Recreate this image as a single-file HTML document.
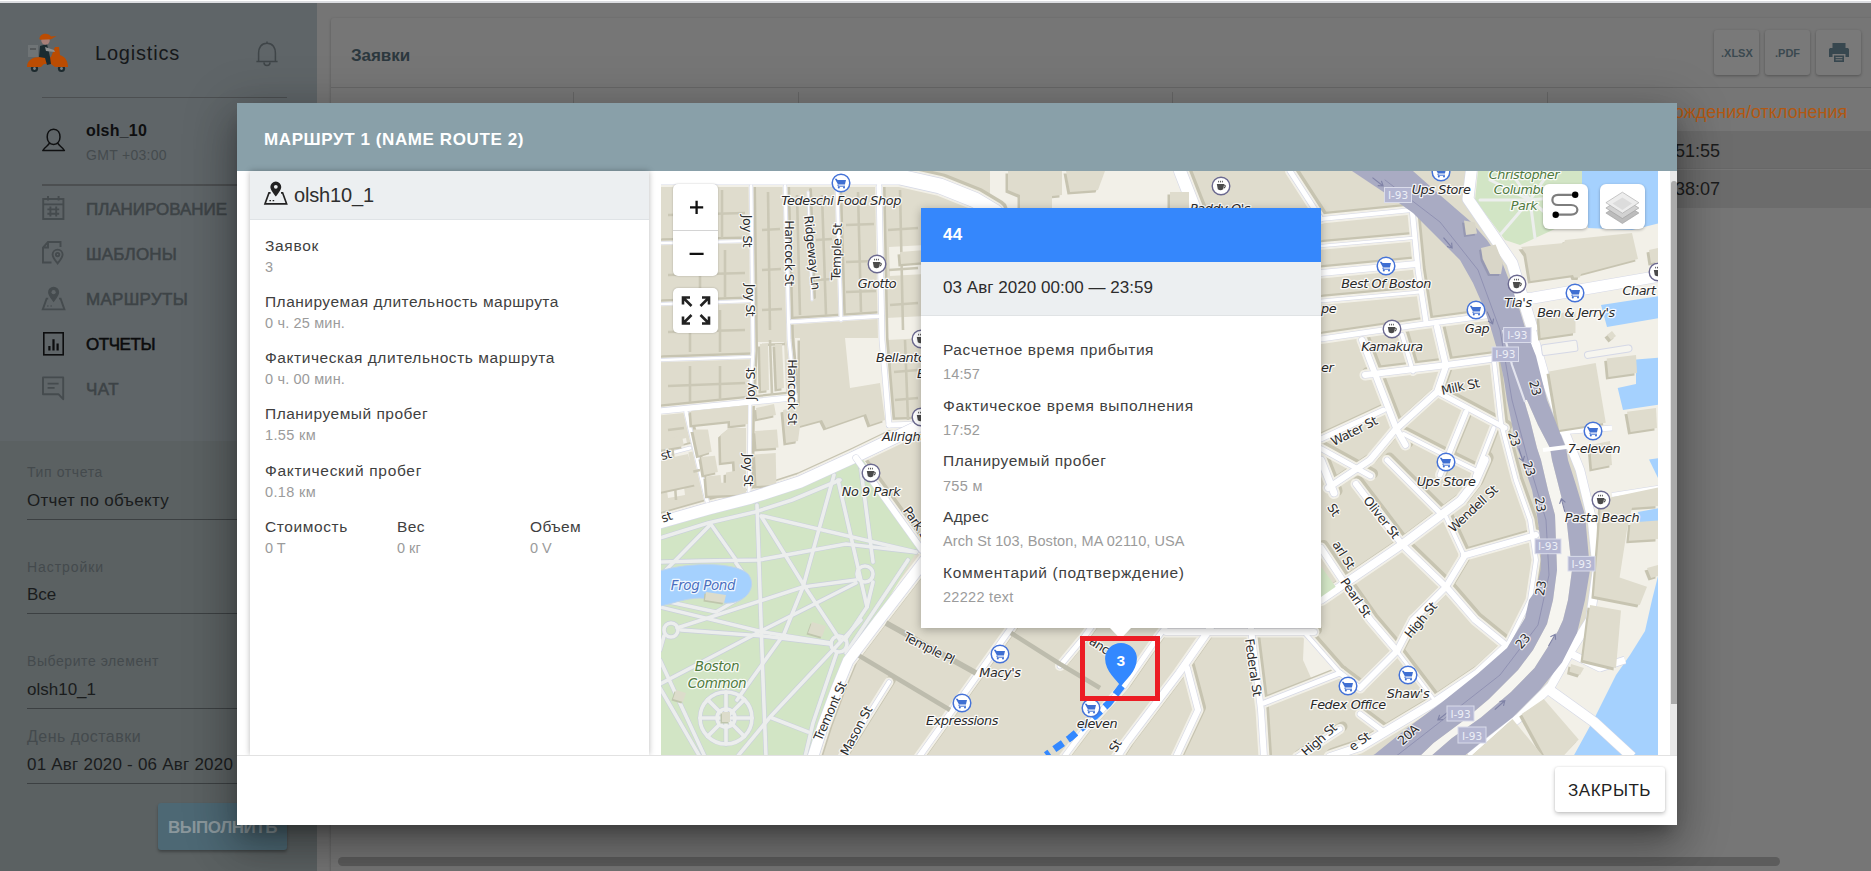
<!DOCTYPE html>
<html lang="ru">
<head>
<meta charset="utf-8">
<title>Logistics</title>
<style>
*{box-sizing:border-box;margin:0;padding:0}
html,body{width:1871px;height:871px;overflow:hidden;background:#757575;font-family:"Liberation Sans",sans-serif;}
.a{position:absolute}
.t{position:absolute;white-space:nowrap;line-height:1}
#topstrip{left:0;top:0;width:1871px;height:3px;background:linear-gradient(#fff 0,#fff 30%,#dcdde1 40%,#dcdde1 100%)}
#side{left:0;top:3px;width:317px;height:868px;background:#5f6568}
#side2{left:0;top:441px;width:317px;height:430px;background:#5b6162}
#gap{left:317px;top:3px;width:14px;height:868px;background:#757575}
#card{left:331px;top:18px;width:1545px;height:860px;background:#767676;border-radius:3px;box-shadow:0 1px 3px rgba(0,0,0,.25)}
.hl{position:absolute;height:1px;background:#4c4f51}
.mi{color:#3d4346;font-size:17px;font-weight:normal;-webkit-text-stroke:.55px currentColor;left:86px;letter-spacing:-.3px}
.lab{color:#444a4d;font-size:14px;left:27px}
.val{color:#1a1c1d;font-size:17px;left:27px}
.ul{position:absolute;left:27px;width:260px;height:1px;background:#3c4042}
#modal{left:237px;top:103px;width:1440px;height:722px;background:#fff;box-shadow:0 11px 15px -7px rgba(0,0,0,.3),0 24px 38px 3px rgba(0,0,0,.2),0 9px 46px 8px rgba(0,0,0,.18)}
#mhead{left:0;top:0;width:1440px;height:68px;background:#89a0a9}
#lpanel{left:13px;top:68px;width:399px;height:584px;background:#fff;box-shadow:0 0 6px rgba(0,0,0,.28)}
#lphead{left:0;top:0;width:399px;height:49px;background:#eceff1;border-bottom:1px solid #dfe3e6}
.fl{color:#3f3f3f;font-size:15.5px}
.fv{color:#9b9b9b;font-size:14.5px}
#map{left:661px;top:171px;width:997px;height:584px;background:#e6e2d4;overflow:hidden}
#foot{left:237px;top:755px;width:1440px;height:70px;background:#fff;border-top:1px solid #e2e2e2}
.btn{position:absolute;background:#fff;border-radius:4px;box-shadow:0 1px 5px rgba(0,0,0,.3)}
#popup{left:921px;top:208px;width:400px;height:420px;background:#fff;box-shadow:0 2px 9px rgba(0,0,0,.28)}
</style>
</head>
<body>
<div id="topstrip" class="a"></div>
<div id="side" class="a"></div>
<div id="side2" class="a"></div>
<div id="gap" class="a"></div>
<div id="card" class="a"></div>

<!-- SIDEBAR -->
<div id="sidebar">
<div class="t" style="left:95px;top:43px;font-size:20px;color:#16181a;letter-spacing:0.8px">Logistics</div>
<div class="hl" style="left:42px;top:97px;width:245px"></div>
<div class="t" style="left:86px;top:123px;font-size:16px;font-weight:bold;color:#0e0f10;letter-spacing:0.2px">olsh_10</div>
<div class="t" style="left:86px;top:148px;font-size:14px;color:#454b4e;letter-spacing:0.3px">GMT +03:00</div>
<div class="hl" style="left:42px;top:184px;width:245px;height:1.5px"></div>
<div class="t mi" style="top:201px;letter-spacing:-0.03px">ПЛАНИРОВАНИЕ</div>
<div class="t mi" style="top:246px;letter-spacing:0.17px">ШАБЛОНЫ</div>
<div class="t mi" style="top:291px;letter-spacing:0.3px">МАРШРУТЫ</div>
<div class="t mi" style="top:336px;color:#0b0c0d;letter-spacing:-0.45px">ОТЧЕТЫ</div>
<div class="t mi" style="top:381px;letter-spacing:0.42px">ЧАТ</div>

<div class="t lab" style="top:465px;letter-spacing:0.62px">Тип отчета</div>
<div class="t val" style="top:492px;letter-spacing:0.28px">Отчет по объекту</div>
<div class="ul" style="top:519px"></div>
<div class="t lab" style="top:560px;letter-spacing:0.93px">Настройки</div>
<div class="t val" style="top:586px;letter-spacing:-0.1px">Все</div>
<div class="ul" style="top:613px"></div>
<div class="t lab" style="top:654px;letter-spacing:0.57px">Выберите элемент</div>
<div class="t val" style="top:681px;letter-spacing:-0px">olsh10_1</div>
<div class="ul" style="top:708px"></div>
<div class="t lab" style="top:729px;font-size:16px;letter-spacing:0.46px">День доставки</div>
<div class="t val" style="top:756px;letter-spacing:0.22px">01 Авг 2020 - 06 Авг 2020</div>
<div class="ul" style="top:783px"></div>
<div class="a" style="left:158px;top:803px;width:129px;height:47px;background:#4d6874;border-radius:3px;box-shadow:0 2px 3px rgba(0,0,0,.3)"></div>
<div class="t" style="left:168px;top:819px;font-size:17px;font-weight:bold;color:#8a979c;letter-spacing:-0.44px">ВЫПОЛНИТЬ</div>
</div>


<!-- SIDEBAR ICONS -->
<svg class="a" style="left:24px;top:30px" width="48" height="46" viewBox="0 0 48 46">
 <circle cx="10.5" cy="38.5" r="3.6" fill="#1d2a2e"/><circle cx="37.5" cy="38.5" r="3.6" fill="#1d2a2e"/>
 <circle cx="10.5" cy="38.5" r="1.4" fill="#7a7f82"/><circle cx="37.5" cy="38.5" r="1.4" fill="#7a7f82"/>
 <path d="M3 37 C3 30 9 27 16 27 L27 27 L31 17 L35 17 L36 25 C42 27 44 32 44 37 L31 37 L27 34 L20 34 L17 37 Z" fill="#bb4c02"/>
 <rect x="4" y="15" width="10" height="12" fill="#6f7476"/><rect x="6" y="18" width="6" height="2" fill="#55595b"/>
 <path d="M16 16 L23 14 L26 27 L27 34 L23 35 L21 28 L15 27 Z" fill="#1b2b30"/>
 <path d="M21 17 L30 20 L31 22 L22 21 Z" fill="#8d8f90"/>
 <circle cx="21.5" cy="10.5" r="4.2" fill="#a77f78"/>
 <path d="M15.5 9 C15.5 3.5 24 2 27 6.5 L32.5 6 L27 9.2 L16 9.8 Z" fill="#bb4c02"/>
</svg>
<svg class="a" style="left:254px;top:39.5px" width="26" height="30" viewBox="0 0 26 30"><path d="M13 3.2 C7 3.2 4.6 8 4.6 13 L4.6 21.5 L21.4 21.5 L21.4 13 C21.4 8 19 3.2 13 3.2 Z M2.4 21.5 H23.6 M10 22.5 A3 3 0 0 0 16 22.5 M13 1.6V3.2" fill="none" stroke="#3f4548" stroke-width="1.5"/></svg>
<svg class="a" style="left:40px;top:126px" width="28" height="28" viewBox="0 0 28 28"><path d="M13.6 3.2 C9 3.2 7.2 7.2 7.2 11 C7.2 14.8 9.4 18.4 13.6 18.4 C17.8 18.4 20 14.8 20 11 C20 7.2 18.2 3.2 13.6 3.2 Z M9.6 16.8 C8.8 19.6 5 20.6 2.8 24.6 L24.4 24.6 C22.2 20.6 18.4 19.6 17.6 16.8" fill="none" stroke="#0f1011" stroke-width="1.5" stroke-linejoin="round"/></svg>
<svg class="a" style="left:40px;top:194px" width="28" height="28" viewBox="0 0 28 28"><g fill="none" stroke="#454b4e" stroke-width="1.9"><rect x="3.2" y="5" width="20.2" height="20"/><path d="M3.2 10.4H23.4M8 2V6.6M18.6 2V6.6M10.4 12.6V22.4M16.2 12.6V22.4M7.4 15.4H19.2M7.4 19.8H19.2"/></g></svg>
<svg class="a" style="left:40px;top:239px" width="28" height="28" viewBox="0 0 28 28"><g fill="none" stroke="#454b4e" stroke-width="1.9"><path d="M20.5 8V3H8L3 8.5V23.5H11.5M3 8.5H8V3"/><path d="M17.6 24.4 C14.6 20.6 12.6 18.6 12.6 15.6 A5 5 0 0 1 22.6 15.6 C22.6 18.6 20.6 20.6 17.6 24.4Z"/><circle cx="17.6" cy="15.6" r="1.7"/></g></svg>
<svg class="a" style="left:40px;top:284px" width="28" height="28" viewBox="0 0 28 28"><g fill="none" stroke="#454b4e" stroke-width="1.9"><path d="M13.6 16.6 C10.6 12.6 9 10.8 9 8.2 A4.6 4.6 0 0 1 18.2 8.2 C18.2 10.8 16.6 12.6 13.6 16.6Z" fill="#454b4e"/><circle cx="13.6" cy="8.2" r="2.1" fill="#5f6568" stroke="none"/><path d="M8.2 14.6H6.6L2.8 25.4H24.4L20.6 14.6H19"/><path d="M7 22h1.6M10.4 22h1.6" stroke-width="1.2"/></g></svg>
<svg class="a" style="left:40px;top:330px" width="28" height="28" viewBox="0 0 28 28"><rect x="3.8" y="2.8" width="19.4" height="22" fill="none" stroke="#0c0d0e" stroke-width="1.6"/><path d="M9.4 20.6V16M13.5 20.6V9.2M17.6 20.6V13.4" stroke="#0c0d0e" stroke-width="2.2" fill="none"/></svg>
<svg class="a" style="left:40px;top:374px" width="28" height="28" viewBox="0 0 28 28"><g fill="none" stroke="#454b4e" stroke-width="1.9"><path d="M3 3.4H23.2V25.2L18.4 20.2H3Z" stroke-linejoin="round"/><path d="M7.6 9.6H18.6M7.6 13.8H14.6" stroke-width="1.8"/></g></svg>

<!-- MAIN -->
<div id="main">
<div class="t" style="left:351px;top:47px;font-size:17px;font-weight:bold;color:#2c383e;letter-spacing:-0.07px">Заявки</div>
<div class="hl" style="left:331px;top:87px;width:1540px;background:#676767"></div>
<div class="a" style="left:1714px;top:30px;width:45px;height:45px;background:#797979;border-radius:3px;box-shadow:0 1px 3px rgba(0,0,0,.3)"></div>
<div class="a" style="left:1765px;top:30px;width:45px;height:45px;background:#797979;border-radius:3px;box-shadow:0 1px 3px rgba(0,0,0,.3)"></div>
<div class="a" style="left:1816px;top:30px;width:45px;height:45px;background:#797979;border-radius:3px;box-shadow:0 1px 3px rgba(0,0,0,.3)"></div>
<div class="t" style="left:1721px;top:48px;font-size:11px;font-weight:bold;color:#3b4950">.XLSX</div>
<div class="t" style="left:1775px;top:48px;font-size:11px;font-weight:bold;color:#3b4950">.PDF</div>
<svg class="a" style="left:1826px;top:40px" width="26" height="26" viewBox="0 0 26 26"><path d="M6.5 3h13v5h-13z M3 9.5 C3 8.5 4 8 5 8H21C22 8 23 8.5 23 9.5V17H19.5V14H6.5V17H3Z M8 15.5h10v6.5H8z" fill="#37474f"/><path d="M9.6 17.6h6.8M9.6 19.8h6.8" stroke="#7c7c7c" stroke-width="1"/></svg>
<div class="a" style="left:573px;top:92px;width:1px;height:12px;background:#666"></div>
<div class="a" style="left:798px;top:92px;width:1px;height:12px;background:#666"></div>
<div class="a" style="left:1172px;top:92px;width:1px;height:12px;background:#666"></div>
<div class="a" style="left:1547px;top:92px;width:1px;height:12px;background:#666"></div>
<div class="a" style="left:1547px;top:131px;width:330px;height:38px;background:#6c6c6c;border-bottom:1px solid #676767"></div>
<div class="a" style="left:1547px;top:170px;width:330px;height:38px;background:#6c6c6c"></div>
<div class="t" style="left:1586px;top:103px;font-size:18px;color:#b25812">Время нахождения/отклонения</div>
<div class="t" style="left:1650px;top:142px;font-size:18px;color:#1c1c1c">00:51:55</div>
<div class="t" style="left:1650px;top:180px;font-size:18px;color:#1c1c1c">00:38:07</div>
<div class="a" style="left:338px;top:857px;width:1442px;height:9px;border-radius:5px;background:#5c5c5c"></div>
</div>

<!-- MODAL -->
<div id="modal" class="a">
 <div id="mhead" class="a"></div>
 <div class="t" style="left:27px;top:28px;font-size:17px;font-weight:bold;color:#fff;letter-spacing:0.6px">МАРШРУТ 1 (NAME ROUTE 2)</div>
 <div id="lpanel" class="a">
  <div id="lphead" class="a"></div>
  <div class="t" style="left:44px;top:14px;font-size:20px;color:#2e2e2e;letter-spacing:-0.15px">olsh10_1</div>
  <div class="t fl" style="left:15px;top:67px;letter-spacing:0.69px">Заявок</div>
  <div class="t fv" style="left:15px;top:89px">3</div>
  <div class="t fl" style="left:15px;top:123px;letter-spacing:0.48px">Планируемая длительность маршрута</div>
  <div class="t fv" style="left:15px;top:145px;letter-spacing:0.17px">0 ч. 25 мин.</div>
  <div class="t fl" style="left:15px;top:179px;letter-spacing:0.56px">Фактическая длительность маршрута</div>
  <div class="t fv" style="left:15px;top:201px;letter-spacing:0.17px">0 ч. 00 мин.</div>
  <div class="t fl" style="left:15px;top:235px;letter-spacing:0.5px">Планируемый пробег</div>
  <div class="t fv" style="left:15px;top:257px;letter-spacing:0.35px">1.55 км</div>
  <div class="t fl" style="left:15px;top:292px;letter-spacing:0.69px">Фактический пробег</div>
  <div class="t fv" style="left:15px;top:314px;letter-spacing:0.35px">0.18 км</div>
  <div class="t fl" style="left:15px;top:348px;letter-spacing:0.6px">Стоимость</div>
  <div class="t fv" style="left:15px;top:370px">0 T</div>
  <div class="t fl" style="left:147px;top:348px;letter-spacing:0.43px">Вес</div>
  <div class="t fv" style="left:147px;top:370px">0 кг</div>
  <div class="t fl" style="left:280px;top:348px;letter-spacing:0.32px">Объем</div>
  <div class="t fv" style="left:280px;top:370px">0 V</div>
 </div>
 <svg class="a" style="left:25px;top:76px" width="28" height="28" viewBox="0 0 28 28"><g fill="none" stroke="#222" stroke-width="1.7"><path d="M13.8 16.2 C10.8 12.2 9.2 10.6 9.2 8 A4.6 4.6 0 0 1 18.4 8 C18.4 10.6 16.8 12.2 13.8 16.2Z" fill="#222"/><path d="M8.6 13.8H7L3 24.8H24.6L20.6 13.8H19"/><path d="M7.4 21.6h1.6M10.6 21.6h1.6" stroke-width="1.2"/></g><circle cx="13.8" cy="7.8" r="1.9" fill="#eceff1"/></svg>
 <div class="a" style="left:1433px;top:68px;width:7px;height:584px;background:#e9e9e9"></div>
 <div class="a" style="left:1433.5px;top:78px;width:6.5px;height:523px;background:#ababab;border-radius:3px 3px 0 0"></div>
</div>
<div id="foot" class="a">
 <div class="btn" style="left:1318px;top:11px;width:110px;height:45px;border-radius:3px;box-shadow:0 2px 4px rgba(0,0,0,.22),0 0 2px rgba(0,0,0,.12)"></div>
 <div class="t" style="left:1331px;top:26px;font-size:17px;color:#222;letter-spacing:0.51px">ЗАКРЫТЬ</div>
</div>

<!-- MAP -->
<div id="map" class="a">
<svg id="mapsvg" width="1000" height="584" viewBox="660 171 1000 584" style="position:absolute;left:-1px;top:0">
<!--MAPSTART-->
<rect x="660" y="171" width="1000" height="584" fill="#dfdccd"/>
<polygon points="795,338 881,338 889,444 760,494 756,420 797,408" fill="#f2f0e8" />
<polygon points="690,424 747,419 747,497 709,508" fill="#f2f0e8" />
<polygon points="664,468 681,464 685,495 668,498" fill="#f2f0e8" />
<polygon points="753,405 797,398 800,478 753,494" fill="#f2f0e8" />
<polygon points="889,247 925,245 925,274 890,276" fill="#f2f0e8" />
<polygon points="886,318 925,316 925,338 887,340" fill="#f2f0e8" />
<polygon points="757,342 784,342 786,392 757,396" fill="#f2f0e8" />
<polygon points="660,444 686,438 690,462 660,468" fill="#f2f0e8" />
<polygon points="846,338 881,338 884,384 850,388" fill="#f2f0e8" />
<polygon points="1304,637 1337,668 1312,680 1303,660" fill="#f2f0e8" />
<polygon points="990,171 1180,171 1180,212 990,212" fill="#f2f0e8" />
<polyline points="662.5,174.5 902.5,174.5 942.5,183.5 977.5,197.5 997.5,209.5" fill="none" stroke="#c7c4b1" stroke-width="20" stroke-linecap="round" stroke-linejoin="round" />
<polyline points="753.5,183.5 755.5,348.5 752.5,397.5 751.5,497.5" fill="none" stroke="#c7c4b1" stroke-width="5" stroke-linecap="round" stroke-linejoin="round" />
<polyline points="787.5,183.5 791.5,337.5 797.5,395.5" fill="none" stroke="#c7c4b1" stroke-width="5" stroke-linecap="round" stroke-linejoin="round" />
<polyline points="810.5,189.5 814.5,297.5" fill="none" stroke="#c7c4b1" stroke-width="3" stroke-linecap="round" stroke-linejoin="round" />
<polyline points="839.5,183.5 843.5,317.5" fill="none" stroke="#c7c4b1" stroke-width="5" stroke-linecap="round" stroke-linejoin="round" />
<polyline points="881.5,183.5 884.5,337.5 891.5,422.5" fill="none" stroke="#c7c4b1" stroke-width="8" stroke-linecap="round" stroke-linejoin="round" />
<polyline points="791.5,319.5 884.5,313.5" fill="none" stroke="#c7c4b1" stroke-width="5.5" stroke-linecap="round" stroke-linejoin="round" />
<polyline points="662.5,240.5 753.5,238.5" fill="none" stroke="#c7c4b1" stroke-width="4.5" stroke-linecap="round" stroke-linejoin="round" />
<polyline points="662.5,301.5 753.5,298.5" fill="none" stroke="#c7c4b1" stroke-width="4.5" stroke-linecap="round" stroke-linejoin="round" />
<polyline points="662.5,357.5 753.5,354.5" fill="none" stroke="#c7c4b1" stroke-width="4.5" stroke-linecap="round" stroke-linejoin="round" />
<polyline points="662.5,408.5 753.5,399.5 811.5,393.5" fill="none" stroke="#c7c4b1" stroke-width="8.5" stroke-linecap="round" stroke-linejoin="round" />
<polyline points="688.5,409.5 710.5,502.5" fill="none" stroke="#c7c4b1" stroke-width="5.5" stroke-linecap="round" stroke-linejoin="round" />
<polyline points="662.5,453.5 692.5,445.5" fill="none" stroke="#c7c4b1" stroke-width="8" stroke-linecap="round" stroke-linejoin="round" />
<polyline points="657.5,521.5 710.5,506.4 753.5,495.4 802.5,479.5 855.5,455.3 922,423.2 932.5,418.5" fill="none" stroke="#c7c4b1" stroke-width="16.5" stroke-linecap="round" stroke-linejoin="round" />
<polyline points="858.5,455.5 924.5,547.5" fill="none" stroke="#c7c4b1" stroke-width="11" stroke-linecap="round" stroke-linejoin="round" />
<polyline points="942.5,537.5 921.5,565.5 881.5,617.5 850.5,658.5 838.5,687.5 825.5,722.5 815.1,755.5" fill="none" stroke="#c7c4b1" stroke-width="15.5" stroke-linecap="round" stroke-linejoin="round" />
<polyline points="1323.5,216.5 1414.5,207.5" fill="none" stroke="#c7c4b1" stroke-width="9" stroke-linecap="round" stroke-linejoin="round" />
<polyline points="1323.5,270.5 1418.5,261.5" fill="none" stroke="#c7c4b1" stroke-width="11" stroke-linecap="round" stroke-linejoin="round" />
<polyline points="1323.5,243.5 1414.5,235.5" fill="none" stroke="#c7c4b1" stroke-width="7.5" stroke-linecap="round" stroke-linejoin="round" />
<polyline points="1323.5,298.5 1422.5,289.5" fill="none" stroke="#c7c4b1" stroke-width="8" stroke-linecap="round" stroke-linejoin="round" />
<polyline points="1414.5,205.5 1420.5,267.5 1428.5,319.5" fill="none" stroke="#c7c4b1" stroke-width="10" stroke-linecap="round" stroke-linejoin="round" />
<polyline points="1323.5,336.5 1419.5,322.5 1495.5,312.5" fill="none" stroke="#c7c4b1" stroke-width="10" stroke-linecap="round" stroke-linejoin="round" />
<polyline points="1367.5,372.5 1441.5,363.5 1496.5,356.1" fill="none" stroke="#c7c4b1" stroke-width="11" stroke-linecap="round" stroke-linejoin="round" />
<polyline points="1364.5,337.5 1398.5,425.5 1408,442.5" fill="none" stroke="#c7c4b1" stroke-width="11" stroke-linecap="round" stroke-linejoin="round" />
<polyline points="1404.5,332.2 1415.5,369" fill="none" stroke="#c7c4b1" stroke-width="9" stroke-linecap="round" stroke-linejoin="round" />
<polyline points="1439.5,324.5 1448.5,363.5" fill="none" stroke="#c7c4b1" stroke-width="11" stroke-linecap="round" stroke-linejoin="round" />
<polyline points="1439.5,389.2 1507.5,425.5" fill="none" stroke="#c7c4b1" stroke-width="10" stroke-linecap="round" stroke-linejoin="round" />
<polyline points="1448.5,363.5 1439.5,389.5 1397.5,427.5 1372.5,457.5 1330.5,485.5" fill="none" stroke="#c7c4b1" stroke-width="11" stroke-linecap="round" stroke-linejoin="round" />
<polyline points="1323.5,436.5 1386,407.5" fill="none" stroke="#c7c4b1" stroke-width="10" stroke-linecap="round" stroke-linejoin="round" />
<polyline points="1406.2,431.5 1441.1,449.5 1477.5,467.5" fill="none" stroke="#c7c4b1" stroke-width="9" stroke-linecap="round" stroke-linejoin="round" />
<polyline points="1468.5,409.5 1452.1,449.5 1442.5,472.5" fill="none" stroke="#c7c4b1" stroke-width="10" stroke-linecap="round" stroke-linejoin="round" />
<polyline points="1496.2,425.5 1477.5,473.5" fill="none" stroke="#c7c4b1" stroke-width="9" stroke-linecap="round" stroke-linejoin="round" />
<polyline points="1323.5,446.1 1373.1,473.5" fill="none" stroke="#c7c4b1" stroke-width="10" stroke-linecap="round" stroke-linejoin="round" />
<polyline points="1389.5,457.5 1441.1,509" fill="none" stroke="#c7c4b1" stroke-width="10" stroke-linecap="round" stroke-linejoin="round" />
<polyline points="1496.2,356.1 1503.5,420.5 1518.3,477.5 1532.5,517.5 1538.5,557.5 1532.5,597.5 1509.5,643.5" fill="none" stroke="#c7c4b1" stroke-width="9" stroke-linecap="round" stroke-linejoin="round" />
<polyline points="1323.5,597.2 1404.5,542 1463.2,497.9 1477.5,479.5 1487.1,457.5" fill="none" stroke="#c7c4b1" stroke-width="13" stroke-linecap="round" stroke-linejoin="round" />
<polyline points="1358.5,481.5 1404.5,542 1450.3,586.1 1477.5,617.5 1509.5,643.5" fill="none" stroke="#c7c4b1" stroke-width="11" stroke-linecap="round" stroke-linejoin="round" />
<polyline points="1323.5,545.5 1345.5,578.5 1373.1,617.5 1399.5,648.5" fill="none" stroke="#c7c4b1" stroke-width="11" stroke-linecap="round" stroke-linejoin="round" />
<polyline points="1399.5,648.5 1436,696.5" fill="none" stroke="#c7c4b1" stroke-width="8" stroke-linecap="round" stroke-linejoin="round" />
<polyline points="1362.5,685.5 1399.5,648.5 1415.5,617.5 1448.5,584.3 1466.5,554.5" fill="none" stroke="#c7c4b1" stroke-width="11" stroke-linecap="round" stroke-linejoin="round" />
<polyline points="1466.5,553 1538.5,532.5" fill="none" stroke="#c7c4b1" stroke-width="11" stroke-linecap="round" stroke-linejoin="round" />
<polyline points="1448.5,514.5 1466.5,553" fill="none" stroke="#c7c4b1" stroke-width="9" stroke-linecap="round" stroke-linejoin="round" />
<polyline points="1323.5,457.5 1336.5,490.5" fill="none" stroke="#c7c4b1" stroke-width="12" stroke-linecap="round" stroke-linejoin="round" />
<polyline points="1332.5,754.5 1362.5,744.5 1436,700.5 1480.5,670.5 1509.5,643.5" fill="none" stroke="#c7c4b1" stroke-width="13" stroke-linecap="round" stroke-linejoin="round" />
<polyline points="1362.5,711.5 1386.5,729.5" fill="none" stroke="#c7c4b1" stroke-width="10" stroke-linecap="round" stroke-linejoin="round" />
<polyline points="1342.5,670.5 1266.5,700.5" fill="none" stroke="#c7c4b1" stroke-width="10" stroke-linecap="round" stroke-linejoin="round" />
<polyline points="1342.5,726.5 1299.5,754.5" fill="none" stroke="#c7c4b1" stroke-width="10" stroke-linecap="round" stroke-linejoin="round" />
<polyline points="1342.5,670.5 1362.5,685.5" fill="none" stroke="#c7c4b1" stroke-width="10" stroke-linecap="round" stroke-linejoin="round" />
<polyline points="1032.5,597.5 1013.5,625.5 921.5,754.5" fill="none" stroke="#c7c4b1" stroke-width="10.5" stroke-linecap="round" stroke-linejoin="round" />
<polyline points="891.5,679.5 844.5,754.5" fill="none" stroke="#c7c4b1" stroke-width="9" stroke-linecap="round" stroke-linejoin="round" />
<polyline points="1062.5,663.5 1086.5,634.5 1102.5,612.5" fill="none" stroke="#c7c4b1" stroke-width="10" stroke-linecap="round" stroke-linejoin="round" />
<polyline points="1217.5,617.5 1209.5,630.5 1181.5,670.5 1128.5,740.5 1119.5,754.5" fill="none" stroke="#c7c4b1" stroke-width="12" stroke-linecap="round" stroke-linejoin="round" />
<polyline points="1167.5,625.5 1160.5,634.5 1126.5,683.5 1087.5,726.5 1066.5,754.5" fill="none" stroke="#c7c4b1" stroke-width="10" stroke-linecap="round" stroke-linejoin="round" />
<polyline points="1189.5,665.5 1200.5,707.5 1178.5,754.5" fill="none" stroke="#c7c4b1" stroke-width="11" stroke-linecap="round" stroke-linejoin="round" />
<polyline points="1252.5,617.5 1253.5,626.5 1263.5,707.5 1266.5,754.5" fill="none" stroke="#c7c4b1" stroke-width="11" stroke-linecap="round" stroke-linejoin="round" />
<polyline points="1168.5,629.5 1316.5,629.5" fill="none" stroke="#c7c4b1" stroke-width="11" stroke-linecap="round" stroke-linejoin="round" />
<polyline points="1306.5,629.5 1342.5,670.5" fill="none" stroke="#c7c4b1" stroke-width="9" stroke-linecap="round" stroke-linejoin="round" />
<polyline points="923.5,421.5 962.5,407.5" fill="none" stroke="#c7c4b1" stroke-width="13" stroke-linecap="round" stroke-linejoin="round" />
<polyline points="891.5,422.5 923.5,421.5" fill="none" stroke="#c7c4b1" stroke-width="10" stroke-linecap="round" stroke-linejoin="round" />
<polyline points="1182.5,168.5 1198.5,209.5" fill="none" stroke="#c7c4b1" stroke-width="17" stroke-linecap="round" stroke-linejoin="round" />
<polyline points="1292.5,168.5 1323.5,216.5" fill="none" stroke="#c7c4b1" stroke-width="10" stroke-linecap="round" stroke-linejoin="round" />
<polyline points="660,177 900,177 940,186 975,200 995,212" fill="none" stroke="#f2f0e8" stroke-width="20" stroke-linecap="round" stroke-linejoin="round" />
<polyline points="751,186 753,351 750,400 749,500" fill="none" stroke="#f2f0e8" stroke-width="5" stroke-linecap="round" stroke-linejoin="round" />
<polyline points="785,186 789,340 795,398" fill="none" stroke="#f2f0e8" stroke-width="5" stroke-linecap="round" stroke-linejoin="round" />
<polyline points="808,192 812,300" fill="none" stroke="#f2f0e8" stroke-width="3" stroke-linecap="round" stroke-linejoin="round" />
<polyline points="837,186 841,320" fill="none" stroke="#f2f0e8" stroke-width="5" stroke-linecap="round" stroke-linejoin="round" />
<polyline points="879,186 882,340 889,425" fill="none" stroke="#f2f0e8" stroke-width="8" stroke-linecap="round" stroke-linejoin="round" />
<polyline points="789,322 882,316" fill="none" stroke="#f2f0e8" stroke-width="5.5" stroke-linecap="round" stroke-linejoin="round" />
<polyline points="660,243 751,241" fill="none" stroke="#f2f0e8" stroke-width="4.5" stroke-linecap="round" stroke-linejoin="round" />
<polyline points="660,304 751,301" fill="none" stroke="#f2f0e8" stroke-width="4.5" stroke-linecap="round" stroke-linejoin="round" />
<polyline points="660,360 751,357" fill="none" stroke="#f2f0e8" stroke-width="4.5" stroke-linecap="round" stroke-linejoin="round" />
<polyline points="660,411 751,402 809,396" fill="none" stroke="#f2f0e8" stroke-width="8.5" stroke-linecap="round" stroke-linejoin="round" />
<polyline points="686,412 708,505" fill="none" stroke="#f2f0e8" stroke-width="5.5" stroke-linecap="round" stroke-linejoin="round" />
<polyline points="660,456 690,448" fill="none" stroke="#f2f0e8" stroke-width="8" stroke-linecap="round" stroke-linejoin="round" />
<polyline points="655,524 708,508.9 751,497.9 800,482 853,457.8 919.5,425.7 930,421" fill="none" stroke="#f2f0e8" stroke-width="16.5" stroke-linecap="round" stroke-linejoin="round" />
<polyline points="856,458 922,550" fill="none" stroke="#f2f0e8" stroke-width="11" stroke-linecap="round" stroke-linejoin="round" />
<polyline points="940,540 919,568 879,620 848,661 836,690 823,725 812.6,758" fill="none" stroke="#f2f0e8" stroke-width="15.5" stroke-linecap="round" stroke-linejoin="round" />
<polyline points="1321,219 1412,210" fill="none" stroke="#f2f0e8" stroke-width="9" stroke-linecap="round" stroke-linejoin="round" />
<polyline points="1321,273 1416,264" fill="none" stroke="#f2f0e8" stroke-width="11" stroke-linecap="round" stroke-linejoin="round" />
<polyline points="1321,246 1412,238" fill="none" stroke="#f2f0e8" stroke-width="7.5" stroke-linecap="round" stroke-linejoin="round" />
<polyline points="1321,301 1420,292" fill="none" stroke="#f2f0e8" stroke-width="8" stroke-linecap="round" stroke-linejoin="round" />
<polyline points="1412,208 1418,270 1426,322" fill="none" stroke="#f2f0e8" stroke-width="10" stroke-linecap="round" stroke-linejoin="round" />
<polyline points="1321,339 1417,325 1493,315" fill="none" stroke="#f2f0e8" stroke-width="10" stroke-linecap="round" stroke-linejoin="round" />
<polyline points="1365,375 1439,366 1494,358.6" fill="none" stroke="#f2f0e8" stroke-width="11" stroke-linecap="round" stroke-linejoin="round" />
<polyline points="1362,340 1396,428 1405.5,445" fill="none" stroke="#f2f0e8" stroke-width="11" stroke-linecap="round" stroke-linejoin="round" />
<polyline points="1402,334.7 1413,371.5" fill="none" stroke="#f2f0e8" stroke-width="9" stroke-linecap="round" stroke-linejoin="round" />
<polyline points="1437,327 1446,366" fill="none" stroke="#f2f0e8" stroke-width="11" stroke-linecap="round" stroke-linejoin="round" />
<polyline points="1437,391.7 1505,428" fill="none" stroke="#f2f0e8" stroke-width="10" stroke-linecap="round" stroke-linejoin="round" />
<polyline points="1446,366 1437,392 1395,430 1370,460 1328,488" fill="none" stroke="#f2f0e8" stroke-width="11" stroke-linecap="round" stroke-linejoin="round" />
<polyline points="1321,439 1383.5,410" fill="none" stroke="#f2f0e8" stroke-width="10" stroke-linecap="round" stroke-linejoin="round" />
<polyline points="1403.7,434 1438.6,452 1475,470" fill="none" stroke="#f2f0e8" stroke-width="9" stroke-linecap="round" stroke-linejoin="round" />
<polyline points="1466,412 1449.6,452 1440,475" fill="none" stroke="#f2f0e8" stroke-width="10" stroke-linecap="round" stroke-linejoin="round" />
<polyline points="1493.7,428 1475,476" fill="none" stroke="#f2f0e8" stroke-width="9" stroke-linecap="round" stroke-linejoin="round" />
<polyline points="1321,448.6 1370.6,476" fill="none" stroke="#f2f0e8" stroke-width="10" stroke-linecap="round" stroke-linejoin="round" />
<polyline points="1387,460 1438.6,511.5" fill="none" stroke="#f2f0e8" stroke-width="10" stroke-linecap="round" stroke-linejoin="round" />
<polyline points="1493.7,358.6 1501,423 1515.8,480 1530,520 1536,560 1530,600 1507,646" fill="none" stroke="#f2f0e8" stroke-width="9" stroke-linecap="round" stroke-linejoin="round" />
<polyline points="1321,599.7 1402,544.5 1460.7,500.4 1475,482 1484.6,460" fill="none" stroke="#f2f0e8" stroke-width="13" stroke-linecap="round" stroke-linejoin="round" />
<polyline points="1356,484 1402,544.5 1447.8,588.6 1475,620 1507,646" fill="none" stroke="#f2f0e8" stroke-width="11" stroke-linecap="round" stroke-linejoin="round" />
<polyline points="1321,548 1343,581 1370.6,620 1397,651" fill="none" stroke="#f2f0e8" stroke-width="11" stroke-linecap="round" stroke-linejoin="round" />
<polyline points="1397,651 1433.5,699" fill="none" stroke="#f2f0e8" stroke-width="8" stroke-linecap="round" stroke-linejoin="round" />
<polyline points="1360,688 1397,651 1413,620 1446,586.8 1464,557" fill="none" stroke="#f2f0e8" stroke-width="11" stroke-linecap="round" stroke-linejoin="round" />
<polyline points="1464,555.5 1536,535" fill="none" stroke="#f2f0e8" stroke-width="11" stroke-linecap="round" stroke-linejoin="round" />
<polyline points="1446,517 1464,555.5" fill="none" stroke="#f2f0e8" stroke-width="9" stroke-linecap="round" stroke-linejoin="round" />
<polyline points="1321,460 1334,493" fill="none" stroke="#f2f0e8" stroke-width="12" stroke-linecap="round" stroke-linejoin="round" />
<polyline points="1330,757 1360,747 1433.5,703 1478,673 1507,646" fill="none" stroke="#f2f0e8" stroke-width="13" stroke-linecap="round" stroke-linejoin="round" />
<polyline points="1360,714 1384,732" fill="none" stroke="#f2f0e8" stroke-width="10" stroke-linecap="round" stroke-linejoin="round" />
<polyline points="1340,673 1264,703" fill="none" stroke="#f2f0e8" stroke-width="10" stroke-linecap="round" stroke-linejoin="round" />
<polyline points="1340,729 1297,757" fill="none" stroke="#f2f0e8" stroke-width="10" stroke-linecap="round" stroke-linejoin="round" />
<polyline points="1340,673 1360,688" fill="none" stroke="#f2f0e8" stroke-width="10" stroke-linecap="round" stroke-linejoin="round" />
<polyline points="1030,600 1011,628 919,757" fill="none" stroke="#f2f0e8" stroke-width="10.5" stroke-linecap="round" stroke-linejoin="round" />
<polyline points="889,682 842,757" fill="none" stroke="#f2f0e8" stroke-width="9" stroke-linecap="round" stroke-linejoin="round" />
<polyline points="1060,666 1084,637 1100,615" fill="none" stroke="#f2f0e8" stroke-width="10" stroke-linecap="round" stroke-linejoin="round" />
<polyline points="1215,620 1207,633 1179,673 1126,743 1117,757" fill="none" stroke="#f2f0e8" stroke-width="12" stroke-linecap="round" stroke-linejoin="round" />
<polyline points="1165,628 1158,637 1124,686 1085,729 1064,757" fill="none" stroke="#f2f0e8" stroke-width="10" stroke-linecap="round" stroke-linejoin="round" />
<polyline points="1187,668 1198,710 1176,757" fill="none" stroke="#f2f0e8" stroke-width="11" stroke-linecap="round" stroke-linejoin="round" />
<polyline points="1250,620 1251,629 1261,710 1264,757" fill="none" stroke="#f2f0e8" stroke-width="11" stroke-linecap="round" stroke-linejoin="round" />
<polyline points="1166,632 1314,632" fill="none" stroke="#f2f0e8" stroke-width="11" stroke-linecap="round" stroke-linejoin="round" />
<polyline points="1304,632 1340,673" fill="none" stroke="#f2f0e8" stroke-width="9" stroke-linecap="round" stroke-linejoin="round" />
<polyline points="921,424 960,410" fill="none" stroke="#f2f0e8" stroke-width="13" stroke-linecap="round" stroke-linejoin="round" />
<polyline points="889,425 921,424" fill="none" stroke="#f2f0e8" stroke-width="10" stroke-linecap="round" stroke-linejoin="round" />
<polyline points="1180,171 1196,212" fill="none" stroke="#f2f0e8" stroke-width="17" stroke-linecap="round" stroke-linejoin="round" />
<polyline points="1290,171 1321,219" fill="none" stroke="#f2f0e8" stroke-width="10" stroke-linecap="round" stroke-linejoin="round" />
<polyline points="660,177 900,177 940,186 975,200 995,212" fill="none" stroke="#d5d8e6" stroke-width="16.2" stroke-linecap="round" stroke-linejoin="round" />
<polyline points="751,186 753,351 750,400 749,500" fill="none" stroke="#d5d8e6" stroke-width="4.2" stroke-linecap="round" stroke-linejoin="round" />
<polyline points="785,186 789,340 795,398" fill="none" stroke="#d5d8e6" stroke-width="4.2" stroke-linecap="round" stroke-linejoin="round" />
<polyline points="808,192 812,300" fill="none" stroke="#d5d8e6" stroke-width="2.7" stroke-linecap="round" stroke-linejoin="round" />
<polyline points="837,186 841,320" fill="none" stroke="#d5d8e6" stroke-width="4.2" stroke-linecap="round" stroke-linejoin="round" />
<polyline points="879,186 882,340 889,425" fill="none" stroke="#d5d8e6" stroke-width="6.2" stroke-linecap="round" stroke-linejoin="round" />
<polyline points="789,322 882,316" fill="none" stroke="#d5d8e6" stroke-width="4.7" stroke-linecap="round" stroke-linejoin="round" />
<polyline points="660,243 751,241" fill="none" stroke="#d5d8e6" stroke-width="3.7" stroke-linecap="round" stroke-linejoin="round" />
<polyline points="660,304 751,301" fill="none" stroke="#d5d8e6" stroke-width="3.7" stroke-linecap="round" stroke-linejoin="round" />
<polyline points="660,360 751,357" fill="none" stroke="#d5d8e6" stroke-width="3.7" stroke-linecap="round" stroke-linejoin="round" />
<polyline points="660,411 751,402 809,396" fill="none" stroke="#d5d8e6" stroke-width="6.7" stroke-linecap="round" stroke-linejoin="round" />
<polyline points="686,412 708,505" fill="none" stroke="#d5d8e6" stroke-width="4.7" stroke-linecap="round" stroke-linejoin="round" />
<polyline points="660,456 690,448" fill="none" stroke="#d5d8e6" stroke-width="4.2" stroke-linecap="round" stroke-linejoin="round" />
<polyline points="655,524 708,508.9 751,497.9 800,482 853,457.8 919.5,425.7 930,421" fill="none" stroke="#d5d8e6" stroke-width="12.7" stroke-linecap="round" stroke-linejoin="round" />
<polyline points="856,458 922,550" fill="none" stroke="#d5d8e6" stroke-width="7.2" stroke-linecap="round" stroke-linejoin="round" />
<polyline points="940,540 919,568 879,620 848,661 836,690 823,725 812.6,758" fill="none" stroke="#d5d8e6" stroke-width="11.7" stroke-linecap="round" stroke-linejoin="round" />
<polyline points="1321,219 1412,210" fill="none" stroke="#d5d8e6" stroke-width="5.2" stroke-linecap="round" stroke-linejoin="round" />
<polyline points="1321,273 1416,264" fill="none" stroke="#d5d8e6" stroke-width="7.2" stroke-linecap="round" stroke-linejoin="round" />
<polyline points="1321,246 1412,238" fill="none" stroke="#d5d8e6" stroke-width="3.7" stroke-linecap="round" stroke-linejoin="round" />
<polyline points="1321,301 1420,292" fill="none" stroke="#d5d8e6" stroke-width="4.2" stroke-linecap="round" stroke-linejoin="round" />
<polyline points="1412,208 1418,270 1426,322" fill="none" stroke="#d5d8e6" stroke-width="6.2" stroke-linecap="round" stroke-linejoin="round" />
<polyline points="1321,339 1417,325 1493,315" fill="none" stroke="#d5d8e6" stroke-width="6.2" stroke-linecap="round" stroke-linejoin="round" />
<polyline points="1365,375 1439,366 1494,358.6" fill="none" stroke="#d5d8e6" stroke-width="7.2" stroke-linecap="round" stroke-linejoin="round" />
<polyline points="1362,340 1396,428 1405.5,445" fill="none" stroke="#d5d8e6" stroke-width="7.2" stroke-linecap="round" stroke-linejoin="round" />
<polyline points="1402,334.7 1413,371.5" fill="none" stroke="#d5d8e6" stroke-width="5.2" stroke-linecap="round" stroke-linejoin="round" />
<polyline points="1437,327 1446,366" fill="none" stroke="#d5d8e6" stroke-width="7.2" stroke-linecap="round" stroke-linejoin="round" />
<polyline points="1437,391.7 1505,428" fill="none" stroke="#d5d8e6" stroke-width="6.2" stroke-linecap="round" stroke-linejoin="round" />
<polyline points="1446,366 1437,392 1395,430 1370,460 1328,488" fill="none" stroke="#d5d8e6" stroke-width="7.2" stroke-linecap="round" stroke-linejoin="round" />
<polyline points="1321,439 1383.5,410" fill="none" stroke="#d5d8e6" stroke-width="6.2" stroke-linecap="round" stroke-linejoin="round" />
<polyline points="1403.7,434 1438.6,452 1475,470" fill="none" stroke="#d5d8e6" stroke-width="5.2" stroke-linecap="round" stroke-linejoin="round" />
<polyline points="1466,412 1449.6,452 1440,475" fill="none" stroke="#d5d8e6" stroke-width="6.2" stroke-linecap="round" stroke-linejoin="round" />
<polyline points="1493.7,428 1475,476" fill="none" stroke="#d5d8e6" stroke-width="5.2" stroke-linecap="round" stroke-linejoin="round" />
<polyline points="1321,448.6 1370.6,476" fill="none" stroke="#d5d8e6" stroke-width="6.2" stroke-linecap="round" stroke-linejoin="round" />
<polyline points="1387,460 1438.6,511.5" fill="none" stroke="#d5d8e6" stroke-width="6.2" stroke-linecap="round" stroke-linejoin="round" />
<polyline points="1493.7,358.6 1501,423 1515.8,480 1530,520 1536,560 1530,600 1507,646" fill="none" stroke="#d5d8e6" stroke-width="5.2" stroke-linecap="round" stroke-linejoin="round" />
<polyline points="1321,599.7 1402,544.5 1460.7,500.4 1475,482 1484.6,460" fill="none" stroke="#d5d8e6" stroke-width="9.2" stroke-linecap="round" stroke-linejoin="round" />
<polyline points="1356,484 1402,544.5 1447.8,588.6 1475,620 1507,646" fill="none" stroke="#d5d8e6" stroke-width="7.2" stroke-linecap="round" stroke-linejoin="round" />
<polyline points="1321,548 1343,581 1370.6,620 1397,651" fill="none" stroke="#d5d8e6" stroke-width="7.2" stroke-linecap="round" stroke-linejoin="round" />
<polyline points="1397,651 1433.5,699" fill="none" stroke="#d5d8e6" stroke-width="4.2" stroke-linecap="round" stroke-linejoin="round" />
<polyline points="1360,688 1397,651 1413,620 1446,586.8 1464,557" fill="none" stroke="#d5d8e6" stroke-width="7.2" stroke-linecap="round" stroke-linejoin="round" />
<polyline points="1464,555.5 1536,535" fill="none" stroke="#d5d8e6" stroke-width="7.2" stroke-linecap="round" stroke-linejoin="round" />
<polyline points="1446,517 1464,555.5" fill="none" stroke="#d5d8e6" stroke-width="5.2" stroke-linecap="round" stroke-linejoin="round" />
<polyline points="1321,460 1334,493" fill="none" stroke="#d5d8e6" stroke-width="8.2" stroke-linecap="round" stroke-linejoin="round" />
<polyline points="1330,757 1360,747 1433.5,703 1478,673 1507,646" fill="none" stroke="#d5d8e6" stroke-width="9.2" stroke-linecap="round" stroke-linejoin="round" />
<polyline points="1360,714 1384,732" fill="none" stroke="#d5d8e6" stroke-width="6.2" stroke-linecap="round" stroke-linejoin="round" />
<polyline points="1340,673 1264,703" fill="none" stroke="#d5d8e6" stroke-width="6.2" stroke-linecap="round" stroke-linejoin="round" />
<polyline points="1340,729 1297,757" fill="none" stroke="#d5d8e6" stroke-width="6.2" stroke-linecap="round" stroke-linejoin="round" />
<polyline points="1340,673 1360,688" fill="none" stroke="#d5d8e6" stroke-width="6.2" stroke-linecap="round" stroke-linejoin="round" />
<polyline points="1030,600 1011,628 919,757" fill="none" stroke="#d5d8e6" stroke-width="6.7" stroke-linecap="round" stroke-linejoin="round" />
<polyline points="889,682 842,757" fill="none" stroke="#d5d8e6" stroke-width="5.2" stroke-linecap="round" stroke-linejoin="round" />
<polyline points="1060,666 1084,637 1100,615" fill="none" stroke="#d5d8e6" stroke-width="6.2" stroke-linecap="round" stroke-linejoin="round" />
<polyline points="1215,620 1207,633 1179,673 1126,743 1117,757" fill="none" stroke="#d5d8e6" stroke-width="8.2" stroke-linecap="round" stroke-linejoin="round" />
<polyline points="1165,628 1158,637 1124,686 1085,729 1064,757" fill="none" stroke="#d5d8e6" stroke-width="6.2" stroke-linecap="round" stroke-linejoin="round" />
<polyline points="1187,668 1198,710 1176,757" fill="none" stroke="#d5d8e6" stroke-width="7.2" stroke-linecap="round" stroke-linejoin="round" />
<polyline points="1250,620 1251,629 1261,710 1264,757" fill="none" stroke="#d5d8e6" stroke-width="7.2" stroke-linecap="round" stroke-linejoin="round" />
<polyline points="1166,632 1314,632" fill="none" stroke="#d5d8e6" stroke-width="7.2" stroke-linecap="round" stroke-linejoin="round" />
<polyline points="1304,632 1340,673" fill="none" stroke="#d5d8e6" stroke-width="5.2" stroke-linecap="round" stroke-linejoin="round" />
<polyline points="921,424 960,410" fill="none" stroke="#d5d8e6" stroke-width="9.2" stroke-linecap="round" stroke-linejoin="round" />
<polyline points="889,425 921,424" fill="none" stroke="#d5d8e6" stroke-width="6.2" stroke-linecap="round" stroke-linejoin="round" />
<polyline points="1180,171 1196,212" fill="none" stroke="#d5d8e6" stroke-width="13.2" stroke-linecap="round" stroke-linejoin="round" />
<polyline points="1290,171 1321,219" fill="none" stroke="#d5d8e6" stroke-width="6.2" stroke-linecap="round" stroke-linejoin="round" />
<polyline points="660,177 900,177 940,186 975,200 995,212" fill="none" stroke="#ffffff" stroke-width="15" stroke-linecap="round" stroke-linejoin="round" />
<polyline points="751,186 753,351 750,400 749,500" fill="none" stroke="#ffffff" stroke-width="3" stroke-linecap="round" stroke-linejoin="round" />
<polyline points="785,186 789,340 795,398" fill="none" stroke="#ffffff" stroke-width="3" stroke-linecap="round" stroke-linejoin="round" />
<polyline points="808,192 812,300" fill="none" stroke="#ffffff" stroke-width="1.5" stroke-linecap="round" stroke-linejoin="round" />
<polyline points="837,186 841,320" fill="none" stroke="#ffffff" stroke-width="3" stroke-linecap="round" stroke-linejoin="round" />
<polyline points="879,186 882,340 889,425" fill="none" stroke="#ffffff" stroke-width="5" stroke-linecap="round" stroke-linejoin="round" />
<polyline points="789,322 882,316" fill="none" stroke="#ffffff" stroke-width="3.5" stroke-linecap="round" stroke-linejoin="round" />
<polyline points="660,243 751,241" fill="none" stroke="#ffffff" stroke-width="2.5" stroke-linecap="round" stroke-linejoin="round" />
<polyline points="660,304 751,301" fill="none" stroke="#ffffff" stroke-width="2.5" stroke-linecap="round" stroke-linejoin="round" />
<polyline points="660,360 751,357" fill="none" stroke="#ffffff" stroke-width="2.5" stroke-linecap="round" stroke-linejoin="round" />
<polyline points="660,411 751,402 809,396" fill="none" stroke="#ffffff" stroke-width="5.5" stroke-linecap="round" stroke-linejoin="round" />
<polyline points="686,412 708,505" fill="none" stroke="#ffffff" stroke-width="3.5" stroke-linecap="round" stroke-linejoin="round" />
<polyline points="660,456 690,448" fill="none" stroke="#ffffff" stroke-width="3" stroke-linecap="round" stroke-linejoin="round" />
<polyline points="655,524 708,508.9 751,497.9 800,482 853,457.8 919.5,425.7 930,421" fill="none" stroke="#ffffff" stroke-width="11.5" stroke-linecap="round" stroke-linejoin="round" />
<polyline points="856,458 922,550" fill="none" stroke="#ffffff" stroke-width="6" stroke-linecap="round" stroke-linejoin="round" />
<polyline points="940,540 919,568 879,620 848,661 836,690 823,725 812.6,758" fill="none" stroke="#ffffff" stroke-width="10.5" stroke-linecap="round" stroke-linejoin="round" />
<polyline points="1321,219 1412,210" fill="none" stroke="#ffffff" stroke-width="4" stroke-linecap="round" stroke-linejoin="round" />
<polyline points="1321,273 1416,264" fill="none" stroke="#ffffff" stroke-width="6" stroke-linecap="round" stroke-linejoin="round" />
<polyline points="1321,246 1412,238" fill="none" stroke="#ffffff" stroke-width="2.5" stroke-linecap="round" stroke-linejoin="round" />
<polyline points="1321,301 1420,292" fill="none" stroke="#ffffff" stroke-width="3" stroke-linecap="round" stroke-linejoin="round" />
<polyline points="1412,208 1418,270 1426,322" fill="none" stroke="#ffffff" stroke-width="5" stroke-linecap="round" stroke-linejoin="round" />
<polyline points="1321,339 1417,325 1493,315" fill="none" stroke="#ffffff" stroke-width="5" stroke-linecap="round" stroke-linejoin="round" />
<polyline points="1365,375 1439,366 1494,358.6" fill="none" stroke="#ffffff" stroke-width="6" stroke-linecap="round" stroke-linejoin="round" />
<polyline points="1362,340 1396,428 1405.5,445" fill="none" stroke="#ffffff" stroke-width="6" stroke-linecap="round" stroke-linejoin="round" />
<polyline points="1402,334.7 1413,371.5" fill="none" stroke="#ffffff" stroke-width="4" stroke-linecap="round" stroke-linejoin="round" />
<polyline points="1437,327 1446,366" fill="none" stroke="#ffffff" stroke-width="6" stroke-linecap="round" stroke-linejoin="round" />
<polyline points="1437,391.7 1505,428" fill="none" stroke="#ffffff" stroke-width="5" stroke-linecap="round" stroke-linejoin="round" />
<polyline points="1446,366 1437,392 1395,430 1370,460 1328,488" fill="none" stroke="#ffffff" stroke-width="6" stroke-linecap="round" stroke-linejoin="round" />
<polyline points="1321,439 1383.5,410" fill="none" stroke="#ffffff" stroke-width="5" stroke-linecap="round" stroke-linejoin="round" />
<polyline points="1403.7,434 1438.6,452 1475,470" fill="none" stroke="#ffffff" stroke-width="4" stroke-linecap="round" stroke-linejoin="round" />
<polyline points="1466,412 1449.6,452 1440,475" fill="none" stroke="#ffffff" stroke-width="5" stroke-linecap="round" stroke-linejoin="round" />
<polyline points="1493.7,428 1475,476" fill="none" stroke="#ffffff" stroke-width="4" stroke-linecap="round" stroke-linejoin="round" />
<polyline points="1321,448.6 1370.6,476" fill="none" stroke="#ffffff" stroke-width="5" stroke-linecap="round" stroke-linejoin="round" />
<polyline points="1387,460 1438.6,511.5" fill="none" stroke="#ffffff" stroke-width="5" stroke-linecap="round" stroke-linejoin="round" />
<polyline points="1493.7,358.6 1501,423 1515.8,480 1530,520 1536,560 1530,600 1507,646" fill="none" stroke="#ffffff" stroke-width="4" stroke-linecap="round" stroke-linejoin="round" />
<polyline points="1321,599.7 1402,544.5 1460.7,500.4 1475,482 1484.6,460" fill="none" stroke="#ffffff" stroke-width="8" stroke-linecap="round" stroke-linejoin="round" />
<polyline points="1356,484 1402,544.5 1447.8,588.6 1475,620 1507,646" fill="none" stroke="#ffffff" stroke-width="6" stroke-linecap="round" stroke-linejoin="round" />
<polyline points="1321,548 1343,581 1370.6,620 1397,651" fill="none" stroke="#ffffff" stroke-width="6" stroke-linecap="round" stroke-linejoin="round" />
<polyline points="1397,651 1433.5,699" fill="none" stroke="#ffffff" stroke-width="3" stroke-linecap="round" stroke-linejoin="round" />
<polyline points="1360,688 1397,651 1413,620 1446,586.8 1464,557" fill="none" stroke="#ffffff" stroke-width="6" stroke-linecap="round" stroke-linejoin="round" />
<polyline points="1464,555.5 1536,535" fill="none" stroke="#ffffff" stroke-width="6" stroke-linecap="round" stroke-linejoin="round" />
<polyline points="1446,517 1464,555.5" fill="none" stroke="#ffffff" stroke-width="4" stroke-linecap="round" stroke-linejoin="round" />
<polyline points="1321,460 1334,493" fill="none" stroke="#ffffff" stroke-width="7" stroke-linecap="round" stroke-linejoin="round" />
<polyline points="1330,757 1360,747 1433.5,703 1478,673 1507,646" fill="none" stroke="#ffffff" stroke-width="8" stroke-linecap="round" stroke-linejoin="round" />
<polyline points="1360,714 1384,732" fill="none" stroke="#ffffff" stroke-width="5" stroke-linecap="round" stroke-linejoin="round" />
<polyline points="1340,673 1264,703" fill="none" stroke="#ffffff" stroke-width="5" stroke-linecap="round" stroke-linejoin="round" />
<polyline points="1340,729 1297,757" fill="none" stroke="#ffffff" stroke-width="5" stroke-linecap="round" stroke-linejoin="round" />
<polyline points="1340,673 1360,688" fill="none" stroke="#ffffff" stroke-width="5" stroke-linecap="round" stroke-linejoin="round" />
<polyline points="1030,600 1011,628 919,757" fill="none" stroke="#ffffff" stroke-width="5.5" stroke-linecap="round" stroke-linejoin="round" />
<polyline points="889,682 842,757" fill="none" stroke="#ffffff" stroke-width="4" stroke-linecap="round" stroke-linejoin="round" />
<polyline points="1060,666 1084,637 1100,615" fill="none" stroke="#ffffff" stroke-width="5" stroke-linecap="round" stroke-linejoin="round" />
<polyline points="1215,620 1207,633 1179,673 1126,743 1117,757" fill="none" stroke="#ffffff" stroke-width="7" stroke-linecap="round" stroke-linejoin="round" />
<polyline points="1165,628 1158,637 1124,686 1085,729 1064,757" fill="none" stroke="#ffffff" stroke-width="5" stroke-linecap="round" stroke-linejoin="round" />
<polyline points="1187,668 1198,710 1176,757" fill="none" stroke="#ffffff" stroke-width="6" stroke-linecap="round" stroke-linejoin="round" />
<polyline points="1250,620 1251,629 1261,710 1264,757" fill="none" stroke="#ffffff" stroke-width="6" stroke-linecap="round" stroke-linejoin="round" />
<polyline points="1166,632 1314,632" fill="none" stroke="#ffffff" stroke-width="6" stroke-linecap="round" stroke-linejoin="round" />
<polyline points="1304,632 1340,673" fill="none" stroke="#ffffff" stroke-width="4" stroke-linecap="round" stroke-linejoin="round" />
<polyline points="921,424 960,410" fill="none" stroke="#ffffff" stroke-width="8" stroke-linecap="round" stroke-linejoin="round" />
<polyline points="889,425 921,424" fill="none" stroke="#ffffff" stroke-width="5" stroke-linecap="round" stroke-linejoin="round" />
<polyline points="1180,171 1196,212" fill="none" stroke="#ffffff" stroke-width="12" stroke-linecap="round" stroke-linejoin="round" />
<polyline points="1290,171 1321,219" fill="none" stroke="#ffffff" stroke-width="5" stroke-linecap="round" stroke-linejoin="round" />
<polyline points="886,623 976,673" fill="none" stroke="#bdbcad" stroke-width="5.5" stroke-linecap="butt" stroke-linejoin="round" />
<polyline points="858,655 950,710" fill="none" stroke="#bdbcad" stroke-width="4.5" stroke-linecap="butt" stroke-linejoin="round" />
<polyline points="1011,633 1060,664 1100,688" fill="none" stroke="#bdbcad" stroke-width="4.5" stroke-linecap="butt" stroke-linejoin="round" />
<polyline points="700,190 700,238" fill="none" stroke="#cbc8b6" stroke-width="2.6" stroke-linecap="butt" stroke-linejoin="round" />
<polyline points="722,190 722,238" fill="none" stroke="#cbc8b6" stroke-width="2.6" stroke-linecap="butt" stroke-linejoin="round" />
<polyline points="668,215 745,213" fill="none" stroke="#cbc8b6" stroke-width="2.6" stroke-linecap="butt" stroke-linejoin="round" />
<polyline points="700,250 700,298" fill="none" stroke="#cbc8b6" stroke-width="2.6" stroke-linecap="butt" stroke-linejoin="round" />
<polyline points="725,250 725,298" fill="none" stroke="#cbc8b6" stroke-width="2.6" stroke-linecap="butt" stroke-linejoin="round" />
<polyline points="668,275 745,273" fill="none" stroke="#cbc8b6" stroke-width="2.6" stroke-linecap="butt" stroke-linejoin="round" />
<polyline points="690,310 690,352" fill="none" stroke="#cbc8b6" stroke-width="2.6" stroke-linecap="butt" stroke-linejoin="round" />
<polyline points="720,310 720,352" fill="none" stroke="#cbc8b6" stroke-width="2.6" stroke-linecap="butt" stroke-linejoin="round" />
<polyline points="668,332 745,330" fill="none" stroke="#cbc8b6" stroke-width="2.6" stroke-linecap="butt" stroke-linejoin="round" />
<polyline points="690,366 690,402" fill="none" stroke="#cbc8b6" stroke-width="2.6" stroke-linecap="butt" stroke-linejoin="round" />
<polyline points="720,366 720,400" fill="none" stroke="#cbc8b6" stroke-width="2.6" stroke-linecap="butt" stroke-linejoin="round" />
<polyline points="668,386 745,383" fill="none" stroke="#cbc8b6" stroke-width="2.6" stroke-linecap="butt" stroke-linejoin="round" />
<polyline points="768,192 770,330" fill="none" stroke="#cbc8b6" stroke-width="2.6" stroke-linecap="butt" stroke-linejoin="round" />
<polyline points="762,230 780,229" fill="none" stroke="#cbc8b6" stroke-width="2.6" stroke-linecap="butt" stroke-linejoin="round" />
<polyline points="762,270 781,269" fill="none" stroke="#cbc8b6" stroke-width="2.6" stroke-linecap="butt" stroke-linejoin="round" />
<polyline points="762,310 782,309" fill="none" stroke="#cbc8b6" stroke-width="2.6" stroke-linecap="butt" stroke-linejoin="round" />
<polyline points="762,345 785,344" fill="none" stroke="#cbc8b6" stroke-width="2.6" stroke-linecap="butt" stroke-linejoin="round" />
<polyline points="770,340 772,395" fill="none" stroke="#cbc8b6" stroke-width="2.6" stroke-linecap="butt" stroke-linejoin="round" />
<polyline points="797,195 800,315" fill="none" stroke="#cbc8b6" stroke-width="2.6" stroke-linecap="butt" stroke-linejoin="round" />
<polyline points="822,195 826,315" fill="none" stroke="#cbc8b6" stroke-width="2.6" stroke-linecap="butt" stroke-linejoin="round" />
<polyline points="816,240 832,239" fill="none" stroke="#cbc8b6" stroke-width="2.6" stroke-linecap="butt" stroke-linejoin="round" />
<polyline points="816,280 833,279" fill="none" stroke="#cbc8b6" stroke-width="2.6" stroke-linecap="butt" stroke-linejoin="round" />
<polyline points="858,192 861,312" fill="none" stroke="#cbc8b6" stroke-width="2.6" stroke-linecap="butt" stroke-linejoin="round" />
<polyline points="846,225 874,224" fill="none" stroke="#cbc8b6" stroke-width="2.6" stroke-linecap="butt" stroke-linejoin="round" />
<polyline points="846,262 875,261" fill="none" stroke="#cbc8b6" stroke-width="2.6" stroke-linecap="butt" stroke-linejoin="round" />
<polyline points="846,292 876,291" fill="none" stroke="#cbc8b6" stroke-width="2.6" stroke-linecap="butt" stroke-linejoin="round" />
<polyline points="900,190 903,330" fill="none" stroke="#cbc8b6" stroke-width="2.6" stroke-linecap="butt" stroke-linejoin="round" />
<polyline points="888,230 918,228" fill="none" stroke="#cbc8b6" stroke-width="2.6" stroke-linecap="butt" stroke-linejoin="round" />
<polyline points="889,270 918,268" fill="none" stroke="#cbc8b6" stroke-width="2.6" stroke-linecap="butt" stroke-linejoin="round" />
<polyline points="890,305 918,303" fill="none" stroke="#cbc8b6" stroke-width="2.6" stroke-linecap="butt" stroke-linejoin="round" />
<polyline points="905,340 908,420" fill="none" stroke="#cbc8b6" stroke-width="2.6" stroke-linecap="butt" stroke-linejoin="round" />
<polyline points="894,372 918,370" fill="none" stroke="#cbc8b6" stroke-width="2.6" stroke-linecap="butt" stroke-linejoin="round" />
<polyline points="895,400 918,398" fill="none" stroke="#cbc8b6" stroke-width="2.6" stroke-linecap="butt" stroke-linejoin="round" />
<polyline points="668,430 684,428" fill="none" stroke="#cbc8b6" stroke-width="2.6" stroke-linecap="butt" stroke-linejoin="round" />
<polyline points="668,478 700,470" fill="none" stroke="#cbc8b6" stroke-width="2.6" stroke-linecap="butt" stroke-linejoin="round" />
<polyline points="672,440 676,500" fill="none" stroke="#cbc8b6" stroke-width="2.6" stroke-linecap="butt" stroke-linejoin="round" />
<polygon points="797.5,340.5 842.5,340.5 847.5,390.5 877.5,385.5 882.5,422.5 867.5,427.5 863.5,416.5 823.5,430.5 819.5,422.5 797.5,428.5 795.5,443.5 783.5,445.5 780.5,412.5 797.5,408.5" fill="#c7c4b1" />
<polygon points="800,338 845,338 850,388 880,383 885,420 870,425 866,414 826,428 822,420 800,426 798,441 786,443 783,410 800,406" fill="#dfdccd" />
<polygon points="688.5,413.5 745.5,407.5 745.5,426.5 727.5,428.5 727.5,423.5 689.5,427.5" fill="#c7c4b1" />
<polygon points="691,411 748,405 748,424 730,426 730,421 692,425" fill="#dfdccd" />
<polygon points="690.5,432.1 705.5,432.1 709.2,454.2 696.1,458.3" fill="#c7c4b1" />
<polygon points="693,429.6 708,429.6 711.7,451.7 698.6,455.8" fill="#dfdccd" />
<polygon points="698.5,459.5 712.5,458.3 715.4,474.5 701.5,477.5" fill="#c7c4b1" />
<polygon points="701,457 715,455.8 717.9,472 704,475" fill="#dfdccd" />
<polygon points="718.1,437.5 726.5,430.5 743.5,430.5 743.5,496.9 705,498.3 703.5,479 718.1,477.5 718.8,485.2 723.5,485.2 723.5,474.9 732.5,473.5 731.9,463.8 718.8,465.2" fill="#c7c4b1" />
<polygon points="720.6,435 729,428 746,428 746,494.4 707.5,495.8 706,476.5 720.6,475 721.3,482.7 726,482.7 726,472.4 735,471 734.4,461.3 721.3,462.7" fill="#dfdccd" />
<polygon points="662.5,478.5 669.5,477.5 670.5,487.5 663.5,488.5" fill="#c7c4b1" />
<polygon points="665,476 672,475 673,485 666,486" fill="#dfdccd" />
<polygon points="753.5,410.5 771.5,406.5 773.5,417.5 754.5,421.5" fill="#c7c4b1" />
<polygon points="756,408 774,404 776,415 757,419" fill="#dfdccd" />
<polygon points="752.5,433.5 774.5,432.1 776,450.1 754,451.5" fill="#c7c4b1" />
<polygon points="755,431 777,429.6 778.5,447.6 756.5,449" fill="#dfdccd" />
<polygon points="752.5,456.9 773.2,455.5 773.9,487.3 754,488.5" fill="#c7c4b1" />
<polygon points="755,454.4 775.7,453 776.4,484.8 756.5,486" fill="#dfdccd" />
<polygon points="897.5,254.5 922.5,252.5 922.5,264.5 898.5,266.5" fill="#c7c4b1" />
<polygon points="900,252 925,250 925,262 901,264" fill="#dfdccd" />
<polygon points="757.5,346.5 765.5,346.5 766.5,392.5 758.5,393.5" fill="#c7c4b1" />
<polygon points="760,344 768,344 769,390 761,391" fill="#dfdccd" />
<polygon points="772.5,346.5 779.5,346.5 781.5,390.5 774.5,391.5" fill="#c7c4b1" />
<polygon points="775,344 782,344 784,388 777,389" fill="#dfdccd" />
<polygon points="657.5,442.5 679.5,438.5 681.5,448.5 657.5,452.5" fill="#c7c4b1" />
<polygon points="660,440 682,436 684,446 660,450" fill="#dfdccd" />
<polygon points="657.5,462.5 685.5,456.5 694.5,486.5 657.5,494.5" fill="#c7c4b1" />
<polygon points="660,460 688,454 697,484 660,492" fill="#dfdccd" />
<polygon points="1005.5,173.5 1059.5,173.5 1059.5,197.5 1049.5,198.5 1049.5,210.5 1017.5,210.5 1017.5,197.5 1005.5,192.5" fill="#c7c4b1" />
<polygon points="1008,171 1062,171 1062,195 1052,196 1052,208 1020,208 1020,195 1008,190" fill="#dfdccd" />
<polygon points="1063.5,173.5 1102.5,173.5 1095.5,192.5 1067.5,194.5" fill="#c7c4b1" />
<polygon points="1066,171 1105,171 1098,190 1070,192" fill="#dfdccd" />
<polygon points="1167.5,194.5 1186.5,194.5 1186.5,214.5 1167.5,214.5" fill="#c7c4b1" />
<polygon points="1170,192 1189,192 1189,212 1170,212" fill="#dfdccd" />
<polygon points="1321,566.6 1335.7,586.8 1321,597" fill="#d2e5c5" />
<polygon points="660,529 708,515 751,504 800,488 853,464 862,458 918,549 876,620 843,663 830,695 808,757 660,757" fill="#d2e5c5" />
<polyline points="660,538 708,523 755,512 792,500 840,480" fill="none" stroke="#c9cfdb" stroke-width="4.8" stroke-linecap="round" stroke-linejoin="round" />
<polyline points="660,562 700,561 759,560 846,544 916,552" fill="none" stroke="#c9cfdb" stroke-width="4.8" stroke-linecap="round" stroke-linejoin="round" />
<polyline points="757,505 759,562 763,680 766,757" fill="none" stroke="#c9cfdb" stroke-width="4.8" stroke-linecap="round" stroke-linejoin="round" />
<polyline points="761,516 805,587 840,640" fill="none" stroke="#c9cfdb" stroke-width="4.8" stroke-linecap="round" stroke-linejoin="round" />
<polyline points="834,475 803,587 784,634 751,680 737,700" fill="none" stroke="#c9cfdb" stroke-width="4.8" stroke-linecap="round" stroke-linejoin="round" />
<polyline points="838,480 867,607" fill="none" stroke="#c9cfdb" stroke-width="4.8" stroke-linecap="round" stroke-linejoin="round" />
<polyline points="860,462 873,562" fill="none" stroke="#c9cfdb" stroke-width="4.8" stroke-linecap="round" stroke-linejoin="round" />
<polyline points="763,516 916,552" fill="none" stroke="#c9cfdb" stroke-width="4.8" stroke-linecap="round" stroke-linejoin="round" />
<polyline points="660,607 763,632 831,643" fill="none" stroke="#c9cfdb" stroke-width="4.8" stroke-linecap="round" stroke-linejoin="round" />
<polyline points="677,628 803,587 856,580" fill="none" stroke="#c9cfdb" stroke-width="4.8" stroke-linecap="round" stroke-linejoin="round" />
<polyline points="710,523 736,560" fill="none" stroke="#c9cfdb" stroke-width="4.8" stroke-linecap="round" stroke-linejoin="round" />
<polyline points="710,525 660,576" fill="none" stroke="#c9cfdb" stroke-width="4.8" stroke-linecap="round" stroke-linejoin="round" />
<polyline points="908,560 846,653" fill="none" stroke="#c9cfdb" stroke-width="4.8" stroke-linecap="round" stroke-linejoin="round" />
<polyline points="873,582 867,607 845,640" fill="none" stroke="#c9cfdb" stroke-width="4.8" stroke-linecap="round" stroke-linejoin="round" />
<polyline points="660,684 763,630 856,583" fill="none" stroke="#c9cfdb" stroke-width="4.8" stroke-linecap="round" stroke-linejoin="round" />
<polyline points="681,630 763,636 830,644" fill="none" stroke="#c9cfdb" stroke-width="4.8" stroke-linecap="round" stroke-linejoin="round" />
<polyline points="837,652 813,723 805,757" fill="none" stroke="#c9cfdb" stroke-width="4.8" stroke-linecap="round" stroke-linejoin="round" />
<polyline points="772,718 808,732" fill="none" stroke="#c9cfdb" stroke-width="4.8" stroke-linecap="round" stroke-linejoin="round" />
<polyline points="861,620 771,716 737,757" fill="none" stroke="#c9cfdb" stroke-width="4.8" stroke-linecap="round" stroke-linejoin="round" />
<polyline points="660,660 705,757" fill="none" stroke="#c9cfdb" stroke-width="4.8" stroke-linecap="round" stroke-linejoin="round" />
<polyline points="660,688 700,757" fill="none" stroke="#c9cfdb" stroke-width="4.8" stroke-linecap="round" stroke-linejoin="round" />
<polyline points="664,636 660,650" fill="none" stroke="#c9cfdb" stroke-width="4.8" stroke-linecap="round" stroke-linejoin="round" />
<polyline points="660,600 716,612 740,598 748,580 736,563" fill="none" stroke="#c9cfdb" stroke-width="4.8" stroke-linecap="round" stroke-linejoin="round" />
<circle cx="865" cy="574" r="8" fill="none" stroke="#c9cfdb" stroke-width="4.8"/>
<circle cx="839" cy="644" r="8" fill="none" stroke="#c9cfdb" stroke-width="4.8"/>
<circle cx="671" cy="630" r="7" fill="none" stroke="#c9cfdb" stroke-width="4.8"/>
<circle cx="726" cy="718" r="26" fill="none" stroke="#c9cfdb" stroke-width="4.8"/>
<circle cx="726" cy="718" r="9" fill="none" stroke="#c9cfdb" stroke-width="4.8"/>
<polyline points="726,718 752,718" fill="none" stroke="#c9cfdb" stroke-width="4.8" stroke-linecap="round" stroke-linejoin="round" />
<polyline points="726,718 700,718" fill="none" stroke="#c9cfdb" stroke-width="4.8" stroke-linecap="round" stroke-linejoin="round" />
<polyline points="726,718 726,744" fill="none" stroke="#c9cfdb" stroke-width="4.8" stroke-linecap="round" stroke-linejoin="round" />
<polyline points="726,718 726,692" fill="none" stroke="#c9cfdb" stroke-width="4.8" stroke-linecap="round" stroke-linejoin="round" />
<polyline points="726,718 744.382,736.382" fill="none" stroke="#c9cfdb" stroke-width="4.8" stroke-linecap="round" stroke-linejoin="round" />
<polyline points="726,718 707.618,736.382" fill="none" stroke="#c9cfdb" stroke-width="4.8" stroke-linecap="round" stroke-linejoin="round" />
<polyline points="726,718 744.382,699.618" fill="none" stroke="#c9cfdb" stroke-width="4.8" stroke-linecap="round" stroke-linejoin="round" />
<polyline points="726,718 707.618,699.618" fill="none" stroke="#c9cfdb" stroke-width="4.8" stroke-linecap="round" stroke-linejoin="round" />
<polyline points="660,538 708,523 755,512 792,500 840,480" fill="none" stroke="#eceeed" stroke-width="3.6" stroke-linecap="round" stroke-linejoin="round" />
<polyline points="660,562 700,561 759,560 846,544 916,552" fill="none" stroke="#eceeed" stroke-width="3.6" stroke-linecap="round" stroke-linejoin="round" />
<polyline points="757,505 759,562 763,680 766,757" fill="none" stroke="#eceeed" stroke-width="3.6" stroke-linecap="round" stroke-linejoin="round" />
<polyline points="761,516 805,587 840,640" fill="none" stroke="#eceeed" stroke-width="3.6" stroke-linecap="round" stroke-linejoin="round" />
<polyline points="834,475 803,587 784,634 751,680 737,700" fill="none" stroke="#eceeed" stroke-width="3.6" stroke-linecap="round" stroke-linejoin="round" />
<polyline points="838,480 867,607" fill="none" stroke="#eceeed" stroke-width="3.6" stroke-linecap="round" stroke-linejoin="round" />
<polyline points="860,462 873,562" fill="none" stroke="#eceeed" stroke-width="3.6" stroke-linecap="round" stroke-linejoin="round" />
<polyline points="763,516 916,552" fill="none" stroke="#eceeed" stroke-width="3.6" stroke-linecap="round" stroke-linejoin="round" />
<polyline points="660,607 763,632 831,643" fill="none" stroke="#eceeed" stroke-width="3.6" stroke-linecap="round" stroke-linejoin="round" />
<polyline points="677,628 803,587 856,580" fill="none" stroke="#eceeed" stroke-width="3.6" stroke-linecap="round" stroke-linejoin="round" />
<polyline points="710,523 736,560" fill="none" stroke="#eceeed" stroke-width="3.6" stroke-linecap="round" stroke-linejoin="round" />
<polyline points="710,525 660,576" fill="none" stroke="#eceeed" stroke-width="3.6" stroke-linecap="round" stroke-linejoin="round" />
<polyline points="908,560 846,653" fill="none" stroke="#eceeed" stroke-width="3.6" stroke-linecap="round" stroke-linejoin="round" />
<polyline points="873,582 867,607 845,640" fill="none" stroke="#eceeed" stroke-width="3.6" stroke-linecap="round" stroke-linejoin="round" />
<polyline points="660,684 763,630 856,583" fill="none" stroke="#eceeed" stroke-width="3.6" stroke-linecap="round" stroke-linejoin="round" />
<polyline points="681,630 763,636 830,644" fill="none" stroke="#eceeed" stroke-width="3.6" stroke-linecap="round" stroke-linejoin="round" />
<polyline points="837,652 813,723 805,757" fill="none" stroke="#eceeed" stroke-width="3.6" stroke-linecap="round" stroke-linejoin="round" />
<polyline points="772,718 808,732" fill="none" stroke="#eceeed" stroke-width="3.6" stroke-linecap="round" stroke-linejoin="round" />
<polyline points="861,620 771,716 737,757" fill="none" stroke="#eceeed" stroke-width="3.6" stroke-linecap="round" stroke-linejoin="round" />
<polyline points="660,660 705,757" fill="none" stroke="#eceeed" stroke-width="3.6" stroke-linecap="round" stroke-linejoin="round" />
<polyline points="660,688 700,757" fill="none" stroke="#eceeed" stroke-width="3.6" stroke-linecap="round" stroke-linejoin="round" />
<polyline points="664,636 660,650" fill="none" stroke="#eceeed" stroke-width="3.6" stroke-linecap="round" stroke-linejoin="round" />
<polyline points="660,600 716,612 740,598 748,580 736,563" fill="none" stroke="#eceeed" stroke-width="3.6" stroke-linecap="round" stroke-linejoin="round" />
<circle cx="865" cy="574" r="8" fill="none" stroke="#eceeed" stroke-width="3.6"/>
<circle cx="839" cy="644" r="8" fill="none" stroke="#eceeed" stroke-width="3.6"/>
<circle cx="671" cy="630" r="7" fill="none" stroke="#eceeed" stroke-width="3.6"/>
<circle cx="726" cy="718" r="26" fill="none" stroke="#eceeed" stroke-width="3.6"/>
<circle cx="726" cy="718" r="9" fill="none" stroke="#eceeed" stroke-width="3.6"/>
<polyline points="726,718 752,718" fill="none" stroke="#eceeed" stroke-width="3.6" stroke-linecap="round" stroke-linejoin="round" />
<polyline points="726,718 700,718" fill="none" stroke="#eceeed" stroke-width="3.6" stroke-linecap="round" stroke-linejoin="round" />
<polyline points="726,718 726,744" fill="none" stroke="#eceeed" stroke-width="3.6" stroke-linecap="round" stroke-linejoin="round" />
<polyline points="726,718 726,692" fill="none" stroke="#eceeed" stroke-width="3.6" stroke-linecap="round" stroke-linejoin="round" />
<polyline points="726,718 744.382,736.382" fill="none" stroke="#eceeed" stroke-width="3.6" stroke-linecap="round" stroke-linejoin="round" />
<polyline points="726,718 707.618,736.382" fill="none" stroke="#eceeed" stroke-width="3.6" stroke-linecap="round" stroke-linejoin="round" />
<polyline points="726,718 744.382,699.618" fill="none" stroke="#eceeed" stroke-width="3.6" stroke-linecap="round" stroke-linejoin="round" />
<polyline points="726,718 707.618,699.618" fill="none" stroke="#eceeed" stroke-width="3.6" stroke-linecap="round" stroke-linejoin="round" />
<path d="M660,571 C690,562 735,562 748,574 C756,584 750,598 735,602 C722,606 712,598 700,598 C685,598 672,604 660,606 Z" fill="#a5d1fe" stroke="#bcd3ee" stroke-width="1"/>
<polygon points="810.5,623.5 824.5,627.5 820.5,638.5 806.5,634.5" fill="#bfc6ad" />
<polygon points="812,622 826,626 822,637 808,633" fill="#dcdccb" />
<polygon points="704.5,593.5 724.5,596.5 722.5,604.5 703.5,601.5" fill="#bfc6ad" />
<polygon points="706,592 726,595 724,603 705,600" fill="#dcdccb" />
<polygon points="720.5,713.5 728.5,713.5 728.5,723.5 720.5,723.5" fill="#bfc6ad" />
<polygon points="722,712 730,712 730,722 722,722" fill="#dcdccb" />
<polygon points="674.5,691.5 684.5,694.5 681.5,703.5 671.5,700.5" fill="#bfc6ad" />
<polygon points="676,690 686,693 683,702 673,699" fill="#dcdccb" />
<polyline points="655,524 708,508.9 751,497.9 800,482 853,457.8 919.5,425.7 930,421" fill="none" stroke="#d5d8e6" stroke-width="12.7" stroke-linecap="round" stroke-linejoin="round" />
<polyline points="655,524 708,508.9 751,497.9 800,482 853,457.8 919.5,425.7 930,421" fill="none" stroke="#ffffff" stroke-width="11.5" stroke-linecap="round" stroke-linejoin="round" />
<polyline points="856,458 922,550" fill="none" stroke="#d5d8e6" stroke-width="7.2" stroke-linecap="round" stroke-linejoin="round" />
<polyline points="856,458 922,550" fill="none" stroke="#ffffff" stroke-width="6" stroke-linecap="round" stroke-linejoin="round" />
<polyline points="940,540 919,568 879,620 848,661 836,690 823,725 812.6,758" fill="none" stroke="#d5d8e6" stroke-width="11.7" stroke-linecap="round" stroke-linejoin="round" />
<polyline points="940,540 919,568 879,620 848,661 836,690 823,725 812.6,758" fill="none" stroke="#ffffff" stroke-width="10.5" stroke-linecap="round" stroke-linejoin="round" />
<polygon points="1475,171 1470,199 1512,263 1532,331 1546,380 1560,420 1580,470 1592,520 1597,570 1590,620 1569.5,653 1551,686 1520,717 1470,757 1660,757 1660,171" fill="#f2f0e8" />
<polygon points="1478,171 1590,171 1585,200 1570,222 1520,245 1505,240 1475,200" fill="#d2e5c5" />
<polyline points="1490,180 1530,200 1560,225" fill="none" stroke="#eceeed" stroke-width="3" stroke-linecap="round" stroke-linejoin="round" />
<polyline points="1500,235 1530,200 1550,171" fill="none" stroke="#eceeed" stroke-width="3" stroke-linecap="round" stroke-linejoin="round" />
<polyline points="1480,200 1530,200 1584,195" fill="none" stroke="#eceeed" stroke-width="3" stroke-linecap="round" stroke-linejoin="round" />
<polyline points="1510,171 1530,200 1535,238" fill="none" stroke="#eceeed" stroke-width="3" stroke-linecap="round" stroke-linejoin="round" />
<polygon points="1582,171 1660,171 1660,223 1632,230 1588,228 1582,200" fill="#a5d1fe" />
<polygon points="1601,305 1660,296 1660,318 1607,327" fill="#a5d1fe" />
<polygon points="1636,359.5 1660,357.6 1660,404.5 1623,410 1617.7,388 1636,384" fill="#a5d1fe" />
<polygon points="1649,459.6 1660,458 1660,482" fill="#a5d1fe" />
<polygon points="1638,512 1660,508 1660,521 1640,523" fill="#a5d1fe" />
<polygon points="1660,568 1652,600 1645,631 1630,655 1616,675 1595,717 1573,757 1660,757" fill="#a5d1fe" />
<polyline points="1532,331 1546,380 1560,420 1580,470 1592,520 1597,570 1590,620 1569.5,653 1551,686 1520,717 1470,757" fill="none" stroke="#d5d8e6" stroke-width="9.7" stroke-linecap="butt" stroke-linejoin="round" />
<polyline points="1472,165 1468,199 1512,263 1533,331" fill="none" stroke="#d5d8e6" stroke-width="12.2" stroke-linecap="butt" stroke-linejoin="round" />
<polyline points="1510,300 1533,298 1660,276" fill="none" stroke="#d5d8e6" stroke-width="12.2" stroke-linecap="butt" stroke-linejoin="round" />
<polyline points="1546,687.5 1594,722 1632,757" fill="none" stroke="#d5d8e6" stroke-width="11.2" stroke-linecap="butt" stroke-linejoin="round" />
<polyline points="1569.5,653 1600,668 1625,660" fill="none" stroke="#d5d8e6" stroke-width="8.2" stroke-linecap="butt" stroke-linejoin="round" />
<polyline points="1559,432 1612,428" fill="none" stroke="#d5d8e6" stroke-width="6.2" stroke-linecap="butt" stroke-linejoin="round" />
<polyline points="1612,495 1660,487.5" fill="none" stroke="#d5d8e6" stroke-width="5.2" stroke-linecap="butt" stroke-linejoin="round" />
<polyline points="1532,331 1546,380 1560,420 1580,470 1592,520 1597,570 1590,620 1569.5,653 1551,686 1520,717 1470,757" fill="none" stroke="#ffffff" stroke-width="8.5" stroke-linecap="butt" stroke-linejoin="round" />
<polyline points="1472,165 1468,199 1512,263 1533,331" fill="none" stroke="#ffffff" stroke-width="11" stroke-linecap="butt" stroke-linejoin="round" />
<polyline points="1510,300 1533,298 1660,276" fill="none" stroke="#ffffff" stroke-width="11" stroke-linecap="butt" stroke-linejoin="round" />
<polyline points="1546,687.5 1594,722 1632,757" fill="none" stroke="#ffffff" stroke-width="10" stroke-linecap="butt" stroke-linejoin="round" />
<polyline points="1569.5,653 1600,668 1625,660" fill="none" stroke="#ffffff" stroke-width="7" stroke-linecap="butt" stroke-linejoin="round" />
<polyline points="1559,432 1612,428" fill="none" stroke="#ffffff" stroke-width="5" stroke-linecap="butt" stroke-linejoin="round" />
<polyline points="1612,495 1660,487.5" fill="none" stroke="#ffffff" stroke-width="4" stroke-linecap="butt" stroke-linejoin="round" />
<rect x="1541" y="345" width="36" height="11" rx="2" transform="rotate(-8 1541 345)" fill="#f6f5ef" stroke="#d5d8e6" stroke-width="1"/>
<rect x="1584" y="352" width="48" height="7" rx="3.5" transform="rotate(-9 1584 352)" fill="#f6f5ef" stroke="#d5d8e6" stroke-width="1"/>
<polygon points="1518.5,249.5 1561.5,245.5 1562.5,242.5 1629.5,235.5 1635.5,261.5 1578.5,276.5 1577.5,280 1571.5,280 1570.5,277.5 1528,283.5 1523.5,256.5" fill="#c7c4b1" />
<polygon points="1521,247 1564,243 1565,240 1632,233 1638,259 1581,274 1580,277.5 1574,277.5 1573,275 1530.5,281 1526,254" fill="#dfdccd" />
<polygon points="1536.5,318.5 1573,313.5 1573,335.5 1538.1,340.5" fill="#c7c4b1" />
<polygon points="1539,316 1575.5,311 1575.5,333 1540.6,338" fill="#dfdccd" />
<polygon points="1546.5,373.9 1593.2,365.5 1603.3,425.3 1556.5,432.5" fill="#c7c4b1" />
<polygon points="1549,371.4 1595.7,363 1605.8,422.8 1559,430" fill="#dfdccd" />
<polygon points="1604.2,361.1 1633.5,357.5 1634.5,375.5 1606,379.5" fill="#c7c4b1" />
<polygon points="1606.7,358.6 1636,355 1637,373 1608.5,377" fill="#dfdccd" />
<polygon points="1624.5,414.3 1653.5,410.5 1654.5,430.5 1628.1,434.5" fill="#c7c4b1" />
<polygon points="1627,411.8 1656,408 1657,428 1630.6,432" fill="#dfdccd" />
<polygon points="1587.5,447.5 1607.5,443.5 1609.5,467.5 1589.5,471.5" fill="#c7c4b1" />
<polygon points="1590,445 1610,441 1612,465 1592,469" fill="#dfdccd" />
<polygon points="1598.5,502 1655.5,490 1655.5,508.5 1629.5,510.2 1624.5,532.3 1617.1,580 1644.5,589.2 1637.3,607.5 1591.4,598.5 1596.5,536" fill="#c7c4b1" />
<polygon points="1601,499.5 1658,487.5 1658,506 1632,507.7 1627,529.8 1619.6,577.5 1647,586.7 1639.8,605 1593.9,596 1599,533.5" fill="#dfdccd" />
<polygon points="1628.1,524.9 1655.5,523.1 1655.5,541.5 1626.3,543.3" fill="#c7c4b1" />
<polygon points="1630.6,522.4 1658,520.6 1658,539 1628.8,540.8" fill="#dfdccd" />
<polygon points="1587.5,607.5 1618.5,613.1 1613.5,670.5 1580.5,662.5" fill="#c7c4b1" />
<polygon points="1590,605 1621,610.6 1616,668 1583,660" fill="#dfdccd" />
<polygon points="1644.5,570.5 1655.5,567.5 1655.5,578.5 1648.5,580.5" fill="#c7c4b1" />
<polygon points="1647,568 1658,565 1658,576 1651,578" fill="#dfdccd" />
<polygon points="1568.5,666.5 1581.5,670.5 1577.5,677.5 1567,674.2" fill="#c7c4b1" />
<polygon points="1571,664 1584,668 1580,675 1569.5,671.7" fill="#dfdccd" />
<polygon points="1519.2,716.5 1541.2,701.5 1576.2,742.1 1559.5,759.5 1542.5,759.5" fill="#c7c4b1" />
<polygon points="1521.7,714 1543.7,699 1578.7,739.6 1562,757 1545,757" fill="#dfdccd" />
<polygon points="1467.5,759.5 1510,721.5 1541.2,759.5" fill="#c7c4b1" />
<polygon points="1470,757 1512.5,719 1543.7,757" fill="#dfdccd" />
<polygon points="1604.5,337.5 1609.5,333.5 1613.5,338.5 1608.5,342.5" fill="#c7c4b1" />
<polygon points="1607,335 1612,331 1616,336 1611,340" fill="#dfdccd" />
<polygon points="1646.5,252.5 1655.5,250.5 1655.5,264.5 1648.5,265.5" fill="#c7c4b1" />
<polygon points="1649,250 1658,248 1658,262 1651,263" fill="#dfdccd" />
<polygon points="1524,400 1530,420 1537,448 1541,460 1548,490 1555,515 1557,570 1553,600 1547,624 1533,650 1518,670 1489,699 1463,721 1433.5,743 1419,757 1430,757 1452,738 1481,717.6 1511,692 1534.5,668 1558,631 1563,620 1568,600 1572,570 1566,515 1552,460 1550,448 1538,425 1527,400" fill="#f6f5f0" />
<polygon points="1352,171 1385,193 1413,213 1437,237 1460,260 1473,283 1484,308 1492,332 1499,356 1504,380 1507,400 1547,400 1536,356 1526,331 1519,308 1512,288 1502,262 1487,240 1470,221 1440,195 1413,171" fill="#a9abc3" />
<polygon points="1507,400 1512,425 1517,448 1522,460 1532,490 1537,515 1541,545 1540.6,570 1536,590 1529,600 1525,618 1507,648 1478,673.5 1441,703 1406,729 1375,754 1370,757 1419,757 1433.5,743 1463,721 1489,699 1518,670 1533,650 1547,624 1553,600 1557,570 1555,515 1548,490 1541,460 1537,448 1530,420 1524,400" fill="#a9abc3" />
<polygon points="1527,400 1538,425 1550,448 1552,460 1566,515 1572,570 1568,600 1563,620 1558,631 1534.5,668 1511,692 1481,717.6 1452,738 1430,757 1463,757 1488.6,736 1512.5,717.6 1540,690 1562,662.5 1577,633 1585,600 1590,570 1585,515 1576,485 1568,460 1566,448 1555,420 1547,400" fill="#a9abc3" />
<polyline points="1543,450 1574,446" fill="none" stroke="#ffffff" stroke-width="4" stroke-linecap="butt" stroke-linejoin="round" />
<polyline points="1503,330 1512,365 1525,402" fill="none" stroke="#e3e4ee" stroke-width="2.2" stroke-linecap="butt" stroke-linejoin="round" />
<polygon points="1462,222.6 1473,224.5 1475,235.5 1464,237" fill="#9698b2" />
<polygon points="1464,220.6 1475,222.5 1477,233.5 1466,235" fill="#d9d6c8" />
<polygon points="1479,250 1493.6,246.5 1501,265 1499,276 1488,276 1480.7,261" fill="#9698b2" />
<polygon points="1481,248 1495.6,244.5 1503,263 1501,274 1490,274 1482.7,259" fill="#d9d6c8" />
<polyline points="1385,180 1440,222 1478,270 1500,330 1512,400 1528,460 1546,520 1549,575 1538,625 1500,675 1440,722 1395,757" fill="none" stroke="#8a8cae" stroke-width="0.8" stroke-linecap="round" stroke-linejoin="round" />
<g transform="translate(1378 182) rotate(38)"><path d="M-7 0H6M2 -3L6.5 0L2 3" fill="none" stroke="#7f82a6" stroke-width="1.1"/></g>
<g transform="translate(1448 243) rotate(50)"><path d="M-7 0H6M2 -3L6.5 0L2 3" fill="none" stroke="#7f82a6" stroke-width="1.1"/></g>
<g transform="translate(1490 318) rotate(66)"><path d="M-7 0H6M2 -3L6.5 0L2 3" fill="none" stroke="#7f82a6" stroke-width="1.1"/></g>
<g transform="translate(1521 455) rotate(72)"><path d="M-7 0H6M2 -3L6.5 0L2 3" fill="none" stroke="#7f82a6" stroke-width="1.1"/></g>
<g transform="translate(1443 716) rotate(142)"><path d="M-7 0H6M2 -3L6.5 0L2 3" fill="none" stroke="#7f82a6" stroke-width="1.1"/></g>
<g transform="translate(1563 505) rotate(-105)"><path d="M-7 0H6M2 -3L6.5 0L2 3" fill="none" stroke="#7f82a6" stroke-width="1.1"/></g>
<g transform="translate(1552 640) rotate(-60)"><path d="M-7 0H6M2 -3L6.5 0L2 3" fill="none" stroke="#7f82a6" stroke-width="1.1"/></g>
<g transform="translate(1500 705) rotate(-42)"><path d="M-7 0H6M2 -3L6.5 0L2 3" fill="none" stroke="#7f82a6" stroke-width="1.1"/></g>
<rect x="1384.5" y="187.5" width="27" height="15" fill="#b4b6d2" stroke="#d9dbea" stroke-width="1"/>
<text x="1398" y="199.2" font-family="DejaVu Sans,sans-serif" font-size="10.5" fill="#eceef6" text-anchor="middle">I-93</text>
<rect x="1503.6" y="327.5" width="27.5" height="15" fill="#b4b6d2" stroke="#d9dbea" stroke-width="1"/>
<text x="1517.35" y="339.2" font-family="DejaVu Sans,sans-serif" font-size="10.5" fill="#eceef6" text-anchor="middle">I-93</text>
<rect x="1492" y="347" width="26.5" height="14.5" fill="#b4b6d2" stroke="#d9dbea" stroke-width="1"/>
<text x="1505.25" y="358.2" font-family="DejaVu Sans,sans-serif" font-size="10.5" fill="#eceef6" text-anchor="middle">I-93</text>
<rect x="1535" y="539" width="26" height="14.7" fill="#b4b6d2" stroke="#d9dbea" stroke-width="1"/>
<text x="1548" y="550.4" font-family="DejaVu Sans,sans-serif" font-size="10.5" fill="#eceef6" text-anchor="middle">I-93</text>
<rect x="1568" y="556.4" width="27" height="14.6" fill="#b4b6d2" stroke="#d9dbea" stroke-width="1"/>
<text x="1581.5" y="567.7" font-family="DejaVu Sans,sans-serif" font-size="10.5" fill="#eceef6" text-anchor="middle">I-93</text>
<rect x="1447" y="706" width="27" height="15" fill="#b4b6d2" stroke="#d9dbea" stroke-width="1"/>
<text x="1460.5" y="717.7" font-family="DejaVu Sans,sans-serif" font-size="10.5" fill="#eceef6" text-anchor="middle">I-93</text>
<rect x="1458" y="727" width="28" height="16" fill="#b4b6d2" stroke="#d9dbea" stroke-width="1"/>
<text x="1472" y="739.7" font-family="DejaVu Sans,sans-serif" font-size="10.5" fill="#eceef6" text-anchor="middle">I-93</text>
<polyline points="1122,686 1108,704 1090,721 1070,738 1046,755" fill="none" stroke="#3388ff" stroke-width="7" stroke-linecap="butt" stroke-linejoin="round" stroke-dasharray="10.5 6"/>
<g transform="translate(841 183)"><circle r="8.8" fill="#fff" stroke="#4573d8" stroke-width="1.5"/><path d="M-6.2,-4.2 L-4.3,-4.2 L-3.4,-2.9 L5,-2.9 L3.9,1.6 L-3,1.6 Z" fill="#3f6fd2"/><path d="M-3,1.6 L-3,3.2 L4,3.2" fill="none" stroke="#3f6fd2" stroke-width="1"/><circle cx="-2.2" cy="4.6" r="1" fill="#3f6fd2"/><circle cx="3" cy="4.6" r="1" fill="#3f6fd2"/></g>
<text x="841" y="205" font-family="DejaVu Sans,sans-serif" font-style="italic" font-size="12.8" fill="#2a2a2a" text-anchor="middle" stroke="#fff" stroke-width="2.6" stroke-linejoin="round" stroke-opacity=".85" paint-order="stroke" letter-spacing="-0.4">Tedeschi Food Shop</text>
<g transform="translate(877 264)"><circle r="8.8" fill="#fff" stroke="#6b6990" stroke-width="1.4"/><path d="M-4.2,-2 L3.2,-2 L2.2,3.2 Q-0.5,5.4 -3.2,3.2 Z" fill="#4a4a4a"/><path d="M3,-1 Q5.6,-0.6 3,2.2" fill="none" stroke="#4a4a4a" stroke-width="1.1"/><path d="M-2.4,-5.2 v1.6 M-0.5,-5.2 v1.6 M1.4,-5.2 v1.6" stroke="#4a4a4a" stroke-width="0.9"/></g>
<text x="877" y="288" font-family="DejaVu Sans,sans-serif" font-style="italic" font-size="12.8" fill="#2a2a2a" text-anchor="middle" stroke="#fff" stroke-width="2.6" stroke-linejoin="round" stroke-opacity=".85" paint-order="stroke" letter-spacing="-0.4">Grotto</text>
<g transform="translate(871 473)"><circle r="8.8" fill="#fff" stroke="#6b6990" stroke-width="1.4"/><path d="M-4.2,-2 L3.2,-2 L2.2,3.2 Q-0.5,5.4 -3.2,3.2 Z" fill="#4a4a4a"/><path d="M3,-1 Q5.6,-0.6 3,2.2" fill="none" stroke="#4a4a4a" stroke-width="1.1"/><path d="M-2.4,-5.2 v1.6 M-0.5,-5.2 v1.6 M1.4,-5.2 v1.6" stroke="#4a4a4a" stroke-width="0.9"/></g>
<text x="871" y="496" font-family="DejaVu Sans,sans-serif" font-style="italic" font-size="12.8" fill="#2a2a2a" text-anchor="middle" stroke="#fff" stroke-width="2.6" stroke-linejoin="round" stroke-opacity=".85" paint-order="stroke" letter-spacing="-0.4">No 9 Park</text>
<text x="876" y="362" font-family="DejaVu Sans,sans-serif" font-style="italic" font-size="12.8" fill="#2a2a2a" text-anchor="start" stroke="#fff" stroke-width="2.6" stroke-linejoin="round" stroke-opacity=".85" paint-order="stroke" letter-spacing="-0.4">Bellanto</text>
<text x="917" y="378" font-family="DejaVu Sans,sans-serif" font-style="italic" font-size="12.8" fill="#2a2a2a" text-anchor="start" stroke="#fff" stroke-width="2.6" stroke-linejoin="round" stroke-opacity=".85" paint-order="stroke" letter-spacing="-0.4">B</text>
<text x="882" y="441" font-family="DejaVu Sans,sans-serif" font-style="italic" font-size="12.8" fill="#2a2a2a" text-anchor="start" stroke="#fff" stroke-width="2.6" stroke-linejoin="round" stroke-opacity=".85" paint-order="stroke" letter-spacing="-0.4">Allright</text>
<g transform="translate(921 339)"><circle r="8.8" fill="#fff" stroke="#6b6990" stroke-width="1.4"/><path d="M-4.2,-2 L3.2,-2 L2.2,3.2 Q-0.5,5.4 -3.2,3.2 Z" fill="#4a4a4a"/><path d="M3,-1 Q5.6,-0.6 3,2.2" fill="none" stroke="#4a4a4a" stroke-width="1.1"/><path d="M-2.4,-5.2 v1.6 M-0.5,-5.2 v1.6 M1.4,-5.2 v1.6" stroke="#4a4a4a" stroke-width="0.9"/></g>
<g transform="translate(921 417)"><circle r="8.8" fill="#fff" stroke="#6b6990" stroke-width="1.4"/><path d="M-4.2,-2 L3.2,-2 L2.2,3.2 Q-0.5,5.4 -3.2,3.2 Z" fill="#4a4a4a"/><path d="M3,-1 Q5.6,-0.6 3,2.2" fill="none" stroke="#4a4a4a" stroke-width="1.1"/><path d="M-2.4,-5.2 v1.6 M-0.5,-5.2 v1.6 M1.4,-5.2 v1.6" stroke="#4a4a4a" stroke-width="0.9"/></g>
<text x="743" y="231" transform="rotate(90 743 231)" font-family="DejaVu Sans,sans-serif" font-size="12.5" fill="#2d2d2d" text-anchor="middle" stroke="#fff" stroke-width="2.4" stroke-linejoin="round" stroke-opacity=".8" paint-order="stroke" letter-spacing="-0.5">Joy St</text>
<text x="746" y="300" transform="rotate(90 746 300)" font-family="DejaVu Sans,sans-serif" font-size="12.5" fill="#2d2d2d" text-anchor="middle" stroke="#fff" stroke-width="2.4" stroke-linejoin="round" stroke-opacity=".8" paint-order="stroke" letter-spacing="-0.5">Joy St</text>
<text x="755" y="384" transform="rotate(-90 755 384)" font-family="DejaVu Sans,sans-serif" font-size="12.5" fill="#2d2d2d" text-anchor="middle" stroke="#fff" stroke-width="2.4" stroke-linejoin="round" stroke-opacity=".8" paint-order="stroke" letter-spacing="-0.5">Joy St</text>
<text x="744" y="470" transform="rotate(90 744 470)" font-family="DejaVu Sans,sans-serif" font-size="12.5" fill="#2d2d2d" text-anchor="middle" stroke="#fff" stroke-width="2.4" stroke-linejoin="round" stroke-opacity=".8" paint-order="stroke" letter-spacing="-0.5">Joy St</text>
<text x="785" y="253" transform="rotate(90 785 253)" font-family="DejaVu Sans,sans-serif" font-size="12.5" fill="#2d2d2d" text-anchor="middle" stroke="#fff" stroke-width="2.4" stroke-linejoin="round" stroke-opacity=".8" paint-order="stroke" letter-spacing="-0.5">Hancock St</text>
<text x="788" y="392" transform="rotate(90 788 392)" font-family="DejaVu Sans,sans-serif" font-size="12.5" fill="#2d2d2d" text-anchor="middle" stroke="#fff" stroke-width="2.4" stroke-linejoin="round" stroke-opacity=".8" paint-order="stroke" letter-spacing="-0.5">Hancock St</text>
<text x="808" y="253" transform="rotate(84 808 253)" font-family="DejaVu Sans,sans-serif" font-size="12.5" fill="#2d2d2d" text-anchor="middle" stroke="#fff" stroke-width="2.4" stroke-linejoin="round" stroke-opacity=".8" paint-order="stroke" letter-spacing="-0.5">Ridgeway Ln</text>
<text x="841" y="252" transform="rotate(-88 841 252)" font-family="DejaVu Sans,sans-serif" font-size="12.5" fill="#2d2d2d" text-anchor="middle" stroke="#fff" stroke-width="2.4" stroke-linejoin="round" stroke-opacity=".8" paint-order="stroke" letter-spacing="-0.5">Temple St</text>
<text x="667" y="459" transform="rotate(-15 667 459)" font-family="DejaVu Sans,sans-serif" font-size="12.5" fill="#2d2d2d" text-anchor="middle" stroke="#fff" stroke-width="2.4" stroke-linejoin="round" stroke-opacity=".8" paint-order="stroke" letter-spacing="-0.5">st</text>
<text x="668" y="521" transform="rotate(-20 668 521)" font-family="DejaVu Sans,sans-serif" font-size="12.5" fill="#2d2d2d" text-anchor="middle" stroke="#fff" stroke-width="2.4" stroke-linejoin="round" stroke-opacity=".8" paint-order="stroke" letter-spacing="-0.5">st</text>
<text x="703" y="590" font-family="DejaVu Sans,sans-serif" font-style="italic" font-size="13.5" fill="#4a6fc0" text-anchor="middle" stroke="#fff" stroke-width="2.6" stroke-linejoin="round" stroke-opacity=".85" paint-order="stroke" letter-spacing="-0.4">Frog Pond</text>
<text x="717" y="671" font-family="DejaVu Sans,sans-serif" font-style="italic" font-size="13.5" fill="#4f7a3e" text-anchor="middle" stroke="#fff" stroke-width="2.6" stroke-linejoin="round" stroke-opacity=".85" paint-order="stroke" letter-spacing="-0.4">Boston</text>
<text x="717" y="688" font-family="DejaVu Sans,sans-serif" font-style="italic" font-size="13.5" fill="#4f7a3e" text-anchor="middle" stroke="#fff" stroke-width="2.6" stroke-linejoin="round" stroke-opacity=".85" paint-order="stroke" letter-spacing="-0.4">Common</text>
<text x="914" y="527" transform="rotate(55 914 527)" font-family="DejaVu Sans,sans-serif" font-size="12.5" fill="#2d2d2d" text-anchor="middle" stroke="#fff" stroke-width="2.4" stroke-linejoin="round" stroke-opacity=".8" paint-order="stroke" letter-spacing="-0.5">Park St</text>
<text x="834" y="713" transform="rotate(-66 834 713)" font-family="DejaVu Sans,sans-serif" font-size="12.5" fill="#2d2d2d" text-anchor="middle" stroke="#fff" stroke-width="2.4" stroke-linejoin="round" stroke-opacity=".8" paint-order="stroke" letter-spacing="-0.5">Tremont St</text>
<text x="860" y="733" transform="rotate(-62 860 733)" font-family="DejaVu Sans,sans-serif" font-size="12.5" fill="#2d2d2d" text-anchor="middle" stroke="#fff" stroke-width="2.4" stroke-linejoin="round" stroke-opacity=".8" paint-order="stroke" letter-spacing="-0.5">Mason St</text>
<text x="927" y="652" transform="rotate(27 927 652)" font-family="DejaVu Sans,sans-serif" font-size="12.5" fill="#2d2d2d" text-anchor="middle" stroke="#fff" stroke-width="2.4" stroke-linejoin="round" stroke-opacity=".8" paint-order="stroke" letter-spacing="-0.5">Temple Pl</text>
<g transform="translate(1000 654)"><circle r="8.8" fill="#fff" stroke="#4573d8" stroke-width="1.5"/><path d="M-6.2,-4.2 L-4.3,-4.2 L-3.4,-2.9 L5,-2.9 L3.9,1.6 L-3,1.6 Z" fill="#3f6fd2"/><path d="M-3,1.6 L-3,3.2 L4,3.2" fill="none" stroke="#3f6fd2" stroke-width="1"/><circle cx="-2.2" cy="4.6" r="1" fill="#3f6fd2"/><circle cx="3" cy="4.6" r="1" fill="#3f6fd2"/></g>
<text x="1000" y="677" font-family="DejaVu Sans,sans-serif" font-style="italic" font-size="12.8" fill="#2a2a2a" text-anchor="middle" stroke="#fff" stroke-width="2.6" stroke-linejoin="round" stroke-opacity=".85" paint-order="stroke" letter-spacing="-0.4">Macy's</text>
<g transform="translate(962 703)"><circle r="8.8" fill="#fff" stroke="#4573d8" stroke-width="1.5"/><path d="M-6.2,-4.2 L-4.3,-4.2 L-3.4,-2.9 L5,-2.9 L3.9,1.6 L-3,1.6 Z" fill="#3f6fd2"/><path d="M-3,1.6 L-3,3.2 L4,3.2" fill="none" stroke="#3f6fd2" stroke-width="1"/><circle cx="-2.2" cy="4.6" r="1" fill="#3f6fd2"/><circle cx="3" cy="4.6" r="1" fill="#3f6fd2"/></g>
<text x="962" y="725" font-family="DejaVu Sans,sans-serif" font-style="italic" font-size="12.8" fill="#2a2a2a" text-anchor="middle" stroke="#fff" stroke-width="2.6" stroke-linejoin="round" stroke-opacity=".85" paint-order="stroke" letter-spacing="-0.4">Expressions</text>
<g transform="translate(1091 708)"><circle r="8.8" fill="#fff" stroke="#4573d8" stroke-width="1.5"/><path d="M-6.2,-4.2 L-4.3,-4.2 L-3.4,-2.9 L5,-2.9 L3.9,1.6 L-3,1.6 Z" fill="#3f6fd2"/><path d="M-3,1.6 L-3,3.2 L4,3.2" fill="none" stroke="#3f6fd2" stroke-width="1"/><circle cx="-2.2" cy="4.6" r="1" fill="#3f6fd2"/><circle cx="3" cy="4.6" r="1" fill="#3f6fd2"/></g>
<text x="1097" y="728" font-family="DejaVu Sans,sans-serif" font-style="italic" font-size="12.8" fill="#2a2a2a" text-anchor="middle" stroke="#fff" stroke-width="2.6" stroke-linejoin="round" stroke-opacity=".85" paint-order="stroke" letter-spacing="-0.4">eleven</text>
<text x="1249" y="668" transform="rotate(82 1249 668)" font-family="DejaVu Sans,sans-serif" font-size="12.5" fill="#2d2d2d" text-anchor="middle" stroke="#fff" stroke-width="2.4" stroke-linejoin="round" stroke-opacity=".8" paint-order="stroke" letter-spacing="-0.5">Federal St</text>
<text x="1119" y="748" transform="rotate(-60 1119 748)" font-family="DejaVu Sans,sans-serif" font-size="12.5" fill="#2d2d2d" text-anchor="middle" stroke="#fff" stroke-width="2.4" stroke-linejoin="round" stroke-opacity=".8" paint-order="stroke" letter-spacing="-0.5">St</text>
<g transform="translate(1348 686)"><circle r="8.8" fill="#fff" stroke="#4573d8" stroke-width="1.5"/><path d="M-6.2,-4.2 L-4.3,-4.2 L-3.4,-2.9 L5,-2.9 L3.9,1.6 L-3,1.6 Z" fill="#3f6fd2"/><path d="M-3,1.6 L-3,3.2 L4,3.2" fill="none" stroke="#3f6fd2" stroke-width="1"/><circle cx="-2.2" cy="4.6" r="1" fill="#3f6fd2"/><circle cx="3" cy="4.6" r="1" fill="#3f6fd2"/></g>
<text x="1348" y="709" font-family="DejaVu Sans,sans-serif" font-style="italic" font-size="12.8" fill="#2a2a2a" text-anchor="middle" stroke="#fff" stroke-width="2.6" stroke-linejoin="round" stroke-opacity=".85" paint-order="stroke" letter-spacing="-0.4">Fedex Office</text>
<g transform="translate(1408 675)"><circle r="8.8" fill="#fff" stroke="#4573d8" stroke-width="1.5"/><path d="M-6.2,-4.2 L-4.3,-4.2 L-3.4,-2.9 L5,-2.9 L3.9,1.6 L-3,1.6 Z" fill="#3f6fd2"/><path d="M-3,1.6 L-3,3.2 L4,3.2" fill="none" stroke="#3f6fd2" stroke-width="1"/><circle cx="-2.2" cy="4.6" r="1" fill="#3f6fd2"/><circle cx="3" cy="4.6" r="1" fill="#3f6fd2"/></g>
<text x="1408" y="698" font-family="DejaVu Sans,sans-serif" font-style="italic" font-size="12.8" fill="#2a2a2a" text-anchor="middle" stroke="#fff" stroke-width="2.6" stroke-linejoin="round" stroke-opacity=".85" paint-order="stroke" letter-spacing="-0.4">Shaw's</text>
<text x="1424" y="623" transform="rotate(-50 1424 623)" font-family="DejaVu Sans,sans-serif" font-size="12.5" fill="#2d2d2d" text-anchor="middle" stroke="#fff" stroke-width="2.4" stroke-linejoin="round" stroke-opacity=".8" paint-order="stroke" letter-spacing="-0.5">High St</text>
<text x="1322" y="743" transform="rotate(-42 1322 743)" font-family="DejaVu Sans,sans-serif" font-size="12.5" fill="#2d2d2d" text-anchor="middle" stroke="#fff" stroke-width="2.4" stroke-linejoin="round" stroke-opacity=".8" paint-order="stroke" letter-spacing="-0.5">High St</text>
<text x="1362" y="745" transform="rotate(-35 1362 745)" font-family="DejaVu Sans,sans-serif" font-size="12.5" fill="#2d2d2d" text-anchor="middle" stroke="#fff" stroke-width="2.4" stroke-linejoin="round" stroke-opacity=".8" paint-order="stroke" letter-spacing="-0.5">e St</text>
<text x="1352" y="600" transform="rotate(56 1352 600)" font-family="DejaVu Sans,sans-serif" font-size="12.5" fill="#2d2d2d" text-anchor="middle" stroke="#fff" stroke-width="2.4" stroke-linejoin="round" stroke-opacity=".8" paint-order="stroke" letter-spacing="-0.5">Pearl St</text>
<text x="1340" y="557" transform="rotate(58 1340 557)" font-family="DejaVu Sans,sans-serif" font-size="12.5" fill="#2d2d2d" text-anchor="middle" stroke="#fff" stroke-width="2.4" stroke-linejoin="round" stroke-opacity=".8" paint-order="stroke" letter-spacing="-0.5">arl St</text>
<text x="1330" y="512" transform="rotate(58 1330 512)" font-family="DejaVu Sans,sans-serif" font-size="12.5" fill="#2d2d2d" text-anchor="middle" stroke="#fff" stroke-width="2.4" stroke-linejoin="round" stroke-opacity=".8" paint-order="stroke" letter-spacing="-0.5">St</text>
<text x="1378" y="520" transform="rotate(52 1378 520)" font-family="DejaVu Sans,sans-serif" font-size="12.5" fill="#2d2d2d" text-anchor="middle" stroke="#fff" stroke-width="2.4" stroke-linejoin="round" stroke-opacity=".8" paint-order="stroke" letter-spacing="-0.5">Oliver St</text>
<text x="1476" y="512" transform="rotate(-43 1476 512)" font-family="DejaVu Sans,sans-serif" font-size="12.5" fill="#2d2d2d" text-anchor="middle" stroke="#fff" stroke-width="2.4" stroke-linejoin="round" stroke-opacity=".8" paint-order="stroke" letter-spacing="-0.5">Wendell St</text>
<g transform="translate(1446 462)"><circle r="8.8" fill="#fff" stroke="#4573d8" stroke-width="1.5"/><path d="M-6.2,-4.2 L-4.3,-4.2 L-3.4,-2.9 L5,-2.9 L3.9,1.6 L-3,1.6 Z" fill="#3f6fd2"/><path d="M-3,1.6 L-3,3.2 L4,3.2" fill="none" stroke="#3f6fd2" stroke-width="1"/><circle cx="-2.2" cy="4.6" r="1" fill="#3f6fd2"/><circle cx="3" cy="4.6" r="1" fill="#3f6fd2"/></g>
<text x="1446" y="486" font-family="DejaVu Sans,sans-serif" font-style="italic" font-size="12.8" fill="#2a2a2a" text-anchor="middle" stroke="#fff" stroke-width="2.6" stroke-linejoin="round" stroke-opacity=".85" paint-order="stroke" letter-spacing="-0.4">Ups Store</text>
<g transform="translate(1441 172)"><circle r="8.8" fill="#fff" stroke="#4573d8" stroke-width="1.5"/><path d="M-6.2,-4.2 L-4.3,-4.2 L-3.4,-2.9 L5,-2.9 L3.9,1.6 L-3,1.6 Z" fill="#3f6fd2"/><path d="M-3,1.6 L-3,3.2 L4,3.2" fill="none" stroke="#3f6fd2" stroke-width="1"/><circle cx="-2.2" cy="4.6" r="1" fill="#3f6fd2"/><circle cx="3" cy="4.6" r="1" fill="#3f6fd2"/></g>
<text x="1441" y="194" font-family="DejaVu Sans,sans-serif" font-style="italic" font-size="12.8" fill="#2a2a2a" text-anchor="middle" stroke="#fff" stroke-width="2.6" stroke-linejoin="round" stroke-opacity=".85" paint-order="stroke" letter-spacing="-0.4">Ups Store</text>
<g transform="translate(1593 431)"><circle r="8.8" fill="#fff" stroke="#4573d8" stroke-width="1.5"/><path d="M-6.2,-4.2 L-4.3,-4.2 L-3.4,-2.9 L5,-2.9 L3.9,1.6 L-3,1.6 Z" fill="#3f6fd2"/><path d="M-3,1.6 L-3,3.2 L4,3.2" fill="none" stroke="#3f6fd2" stroke-width="1"/><circle cx="-2.2" cy="4.6" r="1" fill="#3f6fd2"/><circle cx="3" cy="4.6" r="1" fill="#3f6fd2"/></g>
<text x="1594" y="453" font-family="DejaVu Sans,sans-serif" font-style="italic" font-size="12.8" fill="#2a2a2a" text-anchor="middle" stroke="#fff" stroke-width="2.6" stroke-linejoin="round" stroke-opacity=".85" paint-order="stroke" letter-spacing="-0.4">7-eleven</text>
<g transform="translate(1601 500)"><circle r="8.8" fill="#fff" stroke="#6b6990" stroke-width="1.4"/><path d="M-4.2,-2 L3.2,-2 L2.2,3.2 Q-0.5,5.4 -3.2,3.2 Z" fill="#4a4a4a"/><path d="M3,-1 Q5.6,-0.6 3,2.2" fill="none" stroke="#4a4a4a" stroke-width="1.1"/><path d="M-2.4,-5.2 v1.6 M-0.5,-5.2 v1.6 M1.4,-5.2 v1.6" stroke="#4a4a4a" stroke-width="0.9"/></g>
<text x="1602" y="522" font-family="DejaVu Sans,sans-serif" font-style="italic" font-size="12.8" fill="#2a2a2a" text-anchor="middle" stroke="#fff" stroke-width="2.6" stroke-linejoin="round" stroke-opacity=".85" paint-order="stroke" letter-spacing="-0.4">Pasta Beach</text>
<g transform="translate(1386 266)"><circle r="8.8" fill="#fff" stroke="#4573d8" stroke-width="1.5"/><path d="M-6.2,-4.2 L-4.3,-4.2 L-3.4,-2.9 L5,-2.9 L3.9,1.6 L-3,1.6 Z" fill="#3f6fd2"/><path d="M-3,1.6 L-3,3.2 L4,3.2" fill="none" stroke="#3f6fd2" stroke-width="1"/><circle cx="-2.2" cy="4.6" r="1" fill="#3f6fd2"/><circle cx="3" cy="4.6" r="1" fill="#3f6fd2"/></g>
<text x="1386" y="288" font-family="DejaVu Sans,sans-serif" font-style="italic" font-size="12.8" fill="#2a2a2a" text-anchor="middle" stroke="#fff" stroke-width="2.6" stroke-linejoin="round" stroke-opacity=".85" paint-order="stroke" letter-spacing="-0.4">Best Of Boston</text>
<g transform="translate(1392 329)"><circle r="8.8" fill="#fff" stroke="#6b6990" stroke-width="1.4"/><path d="M-4.2,-2 L3.2,-2 L2.2,3.2 Q-0.5,5.4 -3.2,3.2 Z" fill="#4a4a4a"/><path d="M3,-1 Q5.6,-0.6 3,2.2" fill="none" stroke="#4a4a4a" stroke-width="1.1"/><path d="M-2.4,-5.2 v1.6 M-0.5,-5.2 v1.6 M1.4,-5.2 v1.6" stroke="#4a4a4a" stroke-width="0.9"/></g>
<text x="1392" y="351" font-family="DejaVu Sans,sans-serif" font-style="italic" font-size="12.8" fill="#2a2a2a" text-anchor="middle" stroke="#fff" stroke-width="2.6" stroke-linejoin="round" stroke-opacity=".85" paint-order="stroke" letter-spacing="-0.4">Kamakura</text>
<g transform="translate(1476 310)"><circle r="8.8" fill="#fff" stroke="#4573d8" stroke-width="1.5"/><path d="M-6.2,-4.2 L-4.3,-4.2 L-3.4,-2.9 L5,-2.9 L3.9,1.6 L-3,1.6 Z" fill="#3f6fd2"/><path d="M-3,1.6 L-3,3.2 L4,3.2" fill="none" stroke="#3f6fd2" stroke-width="1"/><circle cx="-2.2" cy="4.6" r="1" fill="#3f6fd2"/><circle cx="3" cy="4.6" r="1" fill="#3f6fd2"/></g>
<text x="1477" y="333" font-family="DejaVu Sans,sans-serif" font-style="italic" font-size="12.8" fill="#2a2a2a" text-anchor="middle" stroke="#fff" stroke-width="2.6" stroke-linejoin="round" stroke-opacity=".85" paint-order="stroke" letter-spacing="-0.4">Gap</text>
<g transform="translate(1517 284)"><circle r="8.8" fill="#fff" stroke="#6b6990" stroke-width="1.4"/><path d="M-4.2,-2 L3.2,-2 L2.2,3.2 Q-0.5,5.4 -3.2,3.2 Z" fill="#4a4a4a"/><path d="M3,-1 Q5.6,-0.6 3,2.2" fill="none" stroke="#4a4a4a" stroke-width="1.1"/><path d="M-2.4,-5.2 v1.6 M-0.5,-5.2 v1.6 M1.4,-5.2 v1.6" stroke="#4a4a4a" stroke-width="0.9"/></g>
<text x="1518" y="307" font-family="DejaVu Sans,sans-serif" font-style="italic" font-size="12.8" fill="#2a2a2a" text-anchor="middle" stroke="#fff" stroke-width="2.6" stroke-linejoin="round" stroke-opacity=".85" paint-order="stroke" letter-spacing="-0.4">Tia's</text>
<g transform="translate(1575 293)"><circle r="8.8" fill="#fff" stroke="#4573d8" stroke-width="1.5"/><path d="M-6.2,-4.2 L-4.3,-4.2 L-3.4,-2.9 L5,-2.9 L3.9,1.6 L-3,1.6 Z" fill="#3f6fd2"/><path d="M-3,1.6 L-3,3.2 L4,3.2" fill="none" stroke="#3f6fd2" stroke-width="1"/><circle cx="-2.2" cy="4.6" r="1" fill="#3f6fd2"/><circle cx="3" cy="4.6" r="1" fill="#3f6fd2"/></g>
<text x="1576" y="317" font-family="DejaVu Sans,sans-serif" font-style="italic" font-size="12.8" fill="#2a2a2a" text-anchor="middle" stroke="#fff" stroke-width="2.6" stroke-linejoin="round" stroke-opacity=".85" paint-order="stroke" letter-spacing="-0.4">Ben &amp; Jerry's</text>
<g transform="translate(1658 272)"><circle r="8.8" fill="#fff" stroke="#6b6990" stroke-width="1.4"/><path d="M-4.2,-2 L3.2,-2 L2.2,3.2 Q-0.5,5.4 -3.2,3.2 Z" fill="#4a4a4a"/><path d="M3,-1 Q5.6,-0.6 3,2.2" fill="none" stroke="#4a4a4a" stroke-width="1.1"/><path d="M-2.4,-5.2 v1.6 M-0.5,-5.2 v1.6 M1.4,-5.2 v1.6" stroke="#4a4a4a" stroke-width="0.9"/></g>
<text x="1639" y="295" font-family="DejaVu Sans,sans-serif" font-style="italic" font-size="12.8" fill="#2a2a2a" text-anchor="middle" stroke="#fff" stroke-width="2.6" stroke-linejoin="round" stroke-opacity=".85" paint-order="stroke" letter-spacing="-0.4">Chart</text>
<text x="1461" y="391" transform="rotate(-12 1461 391)" font-family="DejaVu Sans,sans-serif" font-size="12.5" fill="#2d2d2d" text-anchor="middle" stroke="#fff" stroke-width="2.4" stroke-linejoin="round" stroke-opacity=".8" paint-order="stroke" letter-spacing="-0.5">Milk St</text>
<text x="1356" y="435" transform="rotate(-27 1356 435)" font-family="DejaVu Sans,sans-serif" font-size="12.5" fill="#2d2d2d" text-anchor="middle" stroke="#fff" stroke-width="2.4" stroke-linejoin="round" stroke-opacity=".8" paint-order="stroke" letter-spacing="-0.5">Water St</text>
<text x="1524" y="179" font-family="DejaVu Sans,sans-serif" font-style="italic" font-size="12.8" fill="#4f7a3e" text-anchor="middle" stroke="#fff" stroke-width="2.6" stroke-linejoin="round" stroke-opacity=".85" paint-order="stroke" letter-spacing="-0.4">Christopher</text>
<text x="1524" y="194" font-family="DejaVu Sans,sans-serif" font-style="italic" font-size="12.8" fill="#4f7a3e" text-anchor="middle" stroke="#fff" stroke-width="2.6" stroke-linejoin="round" stroke-opacity=".85" paint-order="stroke" letter-spacing="-0.4">Columbus</text>
<text x="1524" y="210" font-family="DejaVu Sans,sans-serif" font-style="italic" font-size="12.8" fill="#4f7a3e" text-anchor="middle" stroke="#fff" stroke-width="2.6" stroke-linejoin="round" stroke-opacity=".85" paint-order="stroke" letter-spacing="-0.4">Park</text>
<g transform="translate(1221 186)"><circle r="8.8" fill="#fff" stroke="#6b6990" stroke-width="1.4"/><path d="M-4.2,-2 L3.2,-2 L2.2,3.2 Q-0.5,5.4 -3.2,3.2 Z" fill="#4a4a4a"/><path d="M3,-1 Q5.6,-0.6 3,2.2" fill="none" stroke="#4a4a4a" stroke-width="1.1"/><path d="M-2.4,-5.2 v1.6 M-0.5,-5.2 v1.6 M1.4,-5.2 v1.6" stroke="#4a4a4a" stroke-width="0.9"/></g>
<text x="1220" y="213" font-family="DejaVu Sans,sans-serif" font-style="italic" font-size="12.8" fill="#2a2a2a" text-anchor="middle" stroke="#fff" stroke-width="2.6" stroke-linejoin="round" stroke-opacity=".85" paint-order="stroke" letter-spacing="-0.4">Paddy O's</text>
<text x="1321" y="313" font-family="DejaVu Sans,sans-serif" font-style="italic" font-size="12.8" fill="#2a2a2a" text-anchor="start" stroke="#fff" stroke-width="2.6" stroke-linejoin="round" stroke-opacity=".85" paint-order="stroke" letter-spacing="-0.4">pe</text>
<text x="1321" y="372" font-family="DejaVu Sans,sans-serif" font-style="italic" font-size="12.8" fill="#2a2a2a" text-anchor="start" stroke="#fff" stroke-width="2.6" stroke-linejoin="round" stroke-opacity=".85" paint-order="stroke" letter-spacing="-0.4">er</text>
<text x="1411" y="738" transform="rotate(-42 1411 738)" font-family="DejaVu Sans,sans-serif" font-size="12.5" fill="#2d2d2d" text-anchor="middle" stroke="#fff" stroke-width="2.4" stroke-linejoin="round" stroke-opacity=".8" paint-order="stroke" letter-spacing="-0.5">20A</text>
<text x="1531" y="389" transform="rotate(75 1531 389)" font-family="DejaVu Sans,sans-serif" font-size="12.5" fill="#2d2d2d" text-anchor="middle" stroke="#fff" stroke-width="2.4" stroke-linejoin="round" stroke-opacity=".8" paint-order="stroke" letter-spacing="-0.5">23</text>
<text x="1510" y="440" transform="rotate(72 1510 440)" font-family="DejaVu Sans,sans-serif" font-size="12.5" fill="#2d2d2d" text-anchor="middle" stroke="#fff" stroke-width="2.4" stroke-linejoin="round" stroke-opacity=".8" paint-order="stroke" letter-spacing="-0.5">23</text>
<text x="1525" y="470" transform="rotate(70 1525 470)" font-family="DejaVu Sans,sans-serif" font-size="12.5" fill="#2d2d2d" text-anchor="middle" stroke="#fff" stroke-width="2.4" stroke-linejoin="round" stroke-opacity=".8" paint-order="stroke" letter-spacing="-0.5">23</text>
<text x="1536" y="505" transform="rotate(80 1536 505)" font-family="DejaVu Sans,sans-serif" font-size="12.5" fill="#2d2d2d" text-anchor="middle" stroke="#fff" stroke-width="2.4" stroke-linejoin="round" stroke-opacity=".8" paint-order="stroke" letter-spacing="-0.5">23</text>
<text x="1545" y="589" transform="rotate(-80 1545 589)" font-family="DejaVu Sans,sans-serif" font-size="12.5" fill="#2d2d2d" text-anchor="middle" stroke="#fff" stroke-width="2.4" stroke-linejoin="round" stroke-opacity=".8" paint-order="stroke" letter-spacing="-0.5">23</text>
<text x="1526" y="644" transform="rotate(-50 1526 644)" font-family="DejaVu Sans,sans-serif" font-size="12.5" fill="#2d2d2d" text-anchor="middle" stroke="#fff" stroke-width="2.4" stroke-linejoin="round" stroke-opacity=".8" paint-order="stroke" letter-spacing="-0.5">23</text>
<text x="1097" y="649" transform="rotate(33 1097 649)" font-family="DejaVu Sans,sans-serif" font-size="12.5" fill="#2d2d2d" text-anchor="middle" stroke="#fff" stroke-width="2.4" stroke-linejoin="round" stroke-opacity=".8" paint-order="stroke" letter-spacing="-0.5">anc</text>
<!--MAPEND-->
</svg>
</div>

<!-- MAP CONTROLS -->
<div class="btn" style="left:673px;top:184px;width:45px;height:92px;border-radius:5px;box-shadow:0 0 2px rgba(0,0,0,.25)"></div>
<div class="a" style="left:673px;top:230px;width:45px;height:1px;background:#d4d4d4"></div>
<svg class="a" style="left:673px;top:184px" width="45" height="92" viewBox="0 0 45 92"><path d="M17 23.3h13.2M23.6 16.7v13.2M16.6 69.8h14" stroke="#111" stroke-width="2.3" fill="none"/></svg>
<div class="btn" style="left:673px;top:288px;width:45px;height:45px;border-radius:5px;box-shadow:0 0 2px rgba(0,0,0,.25)"></div>
<svg class="a" style="left:673px;top:288px" width="45" height="45" viewBox="0 0 45 45"><g stroke="#222" stroke-width="2.6" fill="none"><path d="M10 16.5V9.5h7M10.5 10l8 8"/><path d="M36 16.5V9.5h-7M35.5 10l-8 8"/><path d="M10 28.5v7h7M10.5 35l8-8"/><path d="M36 28.5v7h-7M35.5 35l-8-8"/></g></svg>
<div class="btn" style="left:1543px;top:184px;width:45px;height:45px;border-radius:6px;box-shadow:0 1px 3px rgba(0,0,0,.3)"></div>
<svg class="a" style="left:1543px;top:184px" width="45" height="45" viewBox="0 0 45 45"><path d="M32 10.8H15C7.5 10.8 7.5 21 15 21H28C36.5 21 36.5 30.7 28 30.7H12.7" stroke="#7d7d7d" stroke-width="2.2" fill="none"/><circle cx="32.2" cy="10.8" r="3.2" fill="#000"/><circle cx="12.7" cy="30.7" r="3.2" fill="#000"/></svg>
<div class="btn" style="left:1600px;top:184px;width:45px;height:45px;border-radius:6px;box-shadow:0 1px 3px rgba(0,0,0,.3)"></div>
<svg class="a" style="left:1600px;top:184px" width="45" height="45" viewBox="0 0 45 45"><path d="M22.4 18.5L38.9 29 22.4 39.5 5.9 29Z" fill="#bcbcbc" stroke="#9a9a9a" stroke-width=".6"/><path d="M22.4 13.5L38.9 24 22.4 34.5 5.9 24Z" fill="#d2d2d2" stroke="#9a9a9a" stroke-width=".6"/><path d="M22.4 8.2L38.9 18.7 22.4 29.2 5.9 18.7Z" fill="#ededed" stroke="#a5a5a5" stroke-width=".6"/><path d="M22.4 13.6L32 19.6 22.4 26 12.5 19.6Z" fill="#dcdcdc"/></svg>

<!-- POPUP -->
<div id="popup" class="a">
 <div class="a" style="left:0;top:0;width:400px;height:54px;background:#3587fc"></div>
 <div class="a" style="left:0;top:54px;width:400px;height:54px;background:#eceff1;border-bottom:1px solid #e0e3e5"></div>
 <div class="t" style="left:22px;top:18px;font-size:17px;font-weight:bold;color:#fff;letter-spacing:0.39px">44</div>
 <div class="t" style="left:22px;top:71px;font-size:17px;color:#2c2c2c;letter-spacing:0.04px">03 Авг 2020 00:00 — 23:59</div>
 <div class="t fl" style="left:22px;top:134px;letter-spacing:0.54px">Расчетное время прибытия</div>
 <div class="t fv" style="left:22px;top:159px;letter-spacing:0.14px">14:57</div>
 <div class="t fl" style="left:22px;top:190px;letter-spacing:0.64px">Фактическое время выполнения</div>
 <div class="t fv" style="left:22px;top:215px;letter-spacing:0.14px">17:52</div>
 <div class="t fl" style="left:22px;top:245px;letter-spacing:0.52px">Планируемый пробег</div>
 <div class="t fv" style="left:22px;top:271px;letter-spacing:0.3px">755 м</div>
 <div class="t fl" style="left:22px;top:301px;letter-spacing:0.32px">Адрес</div>
 <div class="t fv" style="left:22px;top:326px;letter-spacing:0.07px">Arch St 103, Boston, MA 02110, USA</div>
 <div class="t fl" style="left:22px;top:357px;letter-spacing:0.64px">Комментарий (подтверждение)</div>
 <div class="t fv" style="left:22px;top:382px;letter-spacing:0.29px">22222 text</div>
</div>
<svg class="a" style="left:1105px;top:628px" width="32" height="14" viewBox="1105 628 32 14"><path d="M1110 628 L1131 628 L1120.5 639 Z" fill="#fff"/></svg>

<!-- MARKER -->
<svg class="a" style="left:1100px;top:640px" width="44" height="50" viewBox="1100 640 44 50"><path d="M1121 686.5 C1117 680 1105.1 671.5 1105.1 658.8 A15.9 15.9 0 1 1 1136.9 658.8 C1136.9 671.5 1125 680 1121 686.5 Z" fill="#3388ff"/><text x="1120.8" y="665.8" font-family="Liberation Sans,sans-serif" font-weight="bold" font-size="15.5" fill="#fff" text-anchor="middle">3</text></svg>
<div class="a" style="left:1080px;top:636px;width:80px;height:65px;border:5px solid #ec1c24"></div>

</body>
</html>
